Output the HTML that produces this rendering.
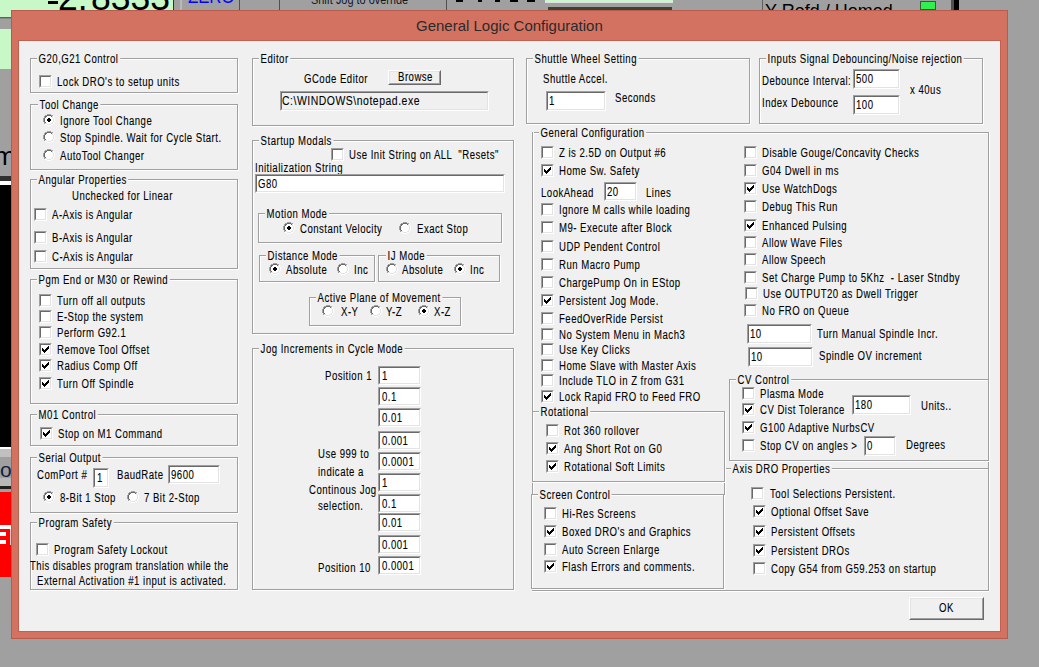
<!DOCTYPE html>
<html><head><meta charset="utf-8"><style>
*{margin:0;padding:0;box-sizing:border-box}
html,body{width:1039px;height:667px;overflow:hidden;background:#a0a0a0}
body{position:relative;font-family:"Liberation Sans",sans-serif}
.a{position:absolute}
.big{position:absolute;font-family:"Liberation Sans",sans-serif;white-space:pre;color:#000}
.t{position:absolute;white-space:pre;font-size:12px;line-height:12px;color:#000;transform:scaleX(0.8);transform-origin:0 0;-webkit-text-stroke:0.1px #000;letter-spacing:0.6px}
.gt{background:#f0f0f0;padding:0 2px}
.title{position:absolute;white-space:pre;font-size:15px;line-height:15px;color:#2a2a2a}
.gb{position:absolute;border:1px solid #a0a0a0;box-shadow:1px 1px 0 0 #fff, inset 1px 1px 0 0 #fff}
.hl{position:absolute;height:2px;border-top:1px solid #a0a0a0;border-bottom:1px solid #fff}
.vl{position:absolute;width:2px;border-left:1px solid #a0a0a0;border-right:1px solid #fff}
.cb{position:absolute;width:13px;height:13px;background:#fff;border-style:solid;border-width:1px;border-color:#a0a0a0 #fff #fff #a0a0a0}
.cbi{position:absolute;left:0;top:0;width:11px;height:11px;border-style:solid;border-width:1px;border-color:#696969 #e3e3e3 #e3e3e3 #696969}
.cb svg{left:2px!important;top:2px!important}
.rb{position:absolute;width:12px;height:12px}
.rb svg{display:block}
.ed{position:absolute;border-style:solid;border-width:1px;border-color:#a0a0a0 #fff #fff #a0a0a0}
.edi{position:absolute;left:0;top:0;right:0;bottom:0;border-style:solid;border-width:1px;border-color:#696969 #e3e3e3 #e3e3e3 #696969}
.bt{position:absolute;background:#f0f0f0;border-style:solid;border-width:1px;border-color:#fff #696969 #696969 #fff}
.bti{position:absolute;left:0;top:0;right:0;bottom:0;border-style:solid;border-width:1px;border-color:#e3e3e3 #a0a0a0 #a0a0a0 #e3e3e3}
</style></head><body>
<div class="a" style="left:0px;top:0px;width:1039px;height:667px;background:#a0a0a0;"></div>
<div class="a" style="left:0px;top:0px;width:173px;height:17px;background:#c8f8c8;"></div>
<div class="a" style="left:0px;top:17px;width:11px;height:1px;background:#606060;"></div>
<div class="a" style="left:0px;top:18px;width:11px;height:1px;background:#888888;"></div>
<div class="a" style="left:0px;top:29px;width:11px;height:40px;background:#c8f8c8;"></div>
<div class="big" style="left:-6px;top:143px;font-size:26px;line-height:26px">m</div>
<div class="a" style="left:0px;top:176px;width:11px;height:5px;background:#303030;"></div>
<div class="a" style="left:0px;top:181px;width:11px;height:4px;background:#ffffff;"></div>
<div class="a" style="left:0px;top:185px;width:11px;height:262px;background:#000000;"></div>
<div class="a" style="left:0px;top:447px;width:11px;height:2px;background:#ffffff;"></div>
<div class="a" style="left:0px;top:449px;width:11px;height:8px;background:#c0c0c0;"></div>
<div class="a" style="left:0px;top:478px;width:11px;height:9px;background:#b8b8b8;"></div>
<div class="a" style="left:0px;top:486px;width:11px;height:3px;background:#202020;"></div>
<div class="big" style="left:0px;top:459px;font-size:21px;line-height:21px;color:#102040">o</div>
<div class="a" style="left:0px;top:492px;width:11px;height:85px;background:#ff0000;"></div>
<div class="a" style="left:0px;top:525px;width:11px;height:4px;background:#ffffff;"></div>
<div class="a" style="left:0px;top:532px;width:6px;height:4px;background:#ffffff;"></div>
<div class="a" style="left:0px;top:540px;width:6px;height:4px;background:#ffffff;"></div>
<div class="a" style="left:10px;top:529px;width:1px;height:16px;background:#ffd0d0;"></div>
<div class="big" style="left:58px;top:-21px;font-size:37px;line-height:37px;transform:scaleX(0.96);transform-origin:0 0">2.</div>
<div class="big" style="left:91px;top:-21px;font-size:37px;line-height:37px;transform:scaleX(0.96);transform-origin:0 0">8333</div>
<div class="a" style="left:48px;top:1px;width:10px;height:3px;background:#000000;"></div>
<div class="a" style="left:173px;top:0px;width:1px;height:10px;background:#303030;"></div>
<div class="a" style="left:180px;top:0px;width:2px;height:10px;background:#b8b8b8;"></div>
<div class="big" style="left:188px;top:-13px;font-size:19px;line-height:19px;color:#0000ff;transform:scaleX(0.88);transform-origin:0 0">ZERO</div>
<div class="a" style="left:239px;top:0px;width:1px;height:10px;background:#505050;"></div>
<div class="a" style="left:279px;top:0px;width:1px;height:10px;background:#505050;"></div>
<div class="big" style="left:311px;top:-7px;font-size:13px;line-height:13px;color:#101828;transform:scaleX(0.84);transform-origin:0 0">Shift Jog to override</div>
<div class="a" style="left:446px;top:0px;width:1px;height:10px;background:#505050;"></div>
<div class="a" style="left:456px;top:0px;width:7px;height:2px;background:#000000;"></div>
<div class="a" style="left:478px;top:0px;width:4px;height:2px;background:#000000;"></div>
<div class="a" style="left:495px;top:0px;width:5px;height:2px;background:#000000;"></div>
<div class="a" style="left:510px;top:0px;width:8px;height:2px;background:#000000;"></div>
<div class="a" style="left:527px;top:0px;width:8px;height:2px;background:#000000;"></div>
<div class="a" style="left:545px;top:0px;width:128px;height:2px;background:#c8f8c8;"></div>
<div class="a" style="left:545px;top:2px;width:128px;height:1px;background:#e0e0e0;"></div>
<div class="a" style="left:548px;top:7px;width:124px;height:3px;background:#404030;"></div>
<div class="a" style="left:762px;top:0px;width:1px;height:10px;background:#606060;"></div>
<div class="big" style="left:765px;top:2px;font-size:18px;line-height:18px">Y Refd / Homed</div>
<div class="a" style="left:920px;top:1px;width:16px;height:9px;background:#30f050;border:1px solid #306030;box-sizing:border-box"></div>
<div class="a" style="left:951px;top:0px;width:3px;height:10px;background:#505050;"></div>
<div class="a" style="left:954px;top:0px;width:5px;height:10px;background:#000000;"></div>
<div class="a" style="left:11px;top:10px;width:997px;height:629px;background:#d47262;box-shadow:inset 0 0 0 1px #b85a4c"></div>
<div class="a" style="left:18px;top:40px;width:983px;height:592px;background:#c06050;"></div>
<div class="a" style="left:19px;top:41px;width:981px;height:590px;background:#f0f0f0;"></div>
<div class="title" style="left:416px;top:18px">General Logic Configuration</div>
<div class="gb" style="left:30px;top:58px;width:208px;height:35px"></div>
<div class="t gt" style="left:37px;top:53px">G20,G21 Control</div>
<div class="cb" style="left:39px;top:75px"><div class="cbi"></div></div>
<div class="t" style="left:57px;top:76px">Lock DRO's to setup units</div>
<div class="gb" style="left:30px;top:104px;width:208px;height:66px"></div>
<div class="t gt" style="left:38px;top:99px">Tool Change</div>
<div class="rb" style="left:43px;top:114px"><svg width="12" height="12" shape-rendering="crispEdges"><rect x="4" y="2" width="4" height="1" fill="#fff"/><rect x="3" y="3" width="6" height="1" fill="#fff"/><rect x="2" y="4" width="8" height="1" fill="#fff"/><rect x="2" y="5" width="8" height="1" fill="#fff"/><rect x="2" y="6" width="8" height="1" fill="#fff"/><rect x="2" y="7" width="8" height="1" fill="#fff"/><rect x="3" y="8" width="6" height="1" fill="#fff"/><rect x="4" y="9" width="4" height="1" fill="#fff"/><rect x="4" y="0" width="1" height="1" fill="#a0a0a0"/><rect x="5" y="0" width="1" height="1" fill="#a0a0a0"/><rect x="6" y="0" width="1" height="1" fill="#a0a0a0"/><rect x="7" y="0" width="1" height="1" fill="#a0a0a0"/><rect x="2" y="1" width="1" height="1" fill="#a0a0a0"/><rect x="3" y="1" width="1" height="1" fill="#a0a0a0"/><rect x="8" y="1" width="1" height="1" fill="#a0a0a0"/><rect x="9" y="1" width="1" height="1" fill="#a0a0a0"/><rect x="1" y="2" width="1" height="1" fill="#a0a0a0"/><rect x="10" y="2" width="1" height="1" fill="#ffffff"/><rect x="1" y="3" width="1" height="1" fill="#a0a0a0"/><rect x="10" y="3" width="1" height="1" fill="#ffffff"/><rect x="0" y="4" width="1" height="1" fill="#a0a0a0"/><rect x="11" y="4" width="1" height="1" fill="#ffffff"/><rect x="0" y="5" width="1" height="1" fill="#a0a0a0"/><rect x="11" y="5" width="1" height="1" fill="#ffffff"/><rect x="0" y="6" width="1" height="1" fill="#a0a0a0"/><rect x="11" y="6" width="1" height="1" fill="#ffffff"/><rect x="0" y="7" width="1" height="1" fill="#a0a0a0"/><rect x="11" y="7" width="1" height="1" fill="#ffffff"/><rect x="1" y="8" width="1" height="1" fill="#a0a0a0"/><rect x="10" y="8" width="1" height="1" fill="#ffffff"/><rect x="1" y="9" width="1" height="1" fill="#a0a0a0"/><rect x="10" y="9" width="1" height="1" fill="#ffffff"/><rect x="2" y="10" width="1" height="1" fill="#ffffff"/><rect x="3" y="10" width="1" height="1" fill="#ffffff"/><rect x="8" y="10" width="1" height="1" fill="#ffffff"/><rect x="9" y="10" width="1" height="1" fill="#ffffff"/><rect x="4" y="11" width="1" height="1" fill="#ffffff"/><rect x="5" y="11" width="1" height="1" fill="#ffffff"/><rect x="6" y="11" width="1" height="1" fill="#ffffff"/><rect x="7" y="11" width="1" height="1" fill="#ffffff"/><rect x="4" y="1" width="1" height="1" fill="#696969"/><rect x="5" y="1" width="1" height="1" fill="#696969"/><rect x="6" y="1" width="1" height="1" fill="#696969"/><rect x="7" y="1" width="1" height="1" fill="#696969"/><rect x="2" y="2" width="1" height="1" fill="#696969"/><rect x="3" y="2" width="1" height="1" fill="#696969"/><rect x="8" y="2" width="1" height="1" fill="#696969"/><rect x="9" y="2" width="1" height="1" fill="#e3e3e3"/><rect x="2" y="3" width="1" height="1" fill="#696969"/><rect x="9" y="3" width="1" height="1" fill="#e3e3e3"/><rect x="1" y="4" width="1" height="1" fill="#696969"/><rect x="10" y="4" width="1" height="1" fill="#e3e3e3"/><rect x="1" y="5" width="1" height="1" fill="#696969"/><rect x="10" y="5" width="1" height="1" fill="#e3e3e3"/><rect x="1" y="6" width="1" height="1" fill="#696969"/><rect x="10" y="6" width="1" height="1" fill="#e3e3e3"/><rect x="1" y="7" width="1" height="1" fill="#696969"/><rect x="10" y="7" width="1" height="1" fill="#e3e3e3"/><rect x="2" y="8" width="1" height="1" fill="#696969"/><rect x="9" y="8" width="1" height="1" fill="#e3e3e3"/><rect x="2" y="9" width="1" height="1" fill="#e3e3e3"/><rect x="3" y="9" width="1" height="1" fill="#e3e3e3"/><rect x="8" y="9" width="1" height="1" fill="#e3e3e3"/><rect x="9" y="9" width="1" height="1" fill="#e3e3e3"/><rect x="4" y="10" width="1" height="1" fill="#e3e3e3"/><rect x="5" y="10" width="1" height="1" fill="#e3e3e3"/><rect x="6" y="10" width="1" height="1" fill="#e3e3e3"/><rect x="7" y="10" width="1" height="1" fill="#e3e3e3"/><path d="M5 4h2v1h1v2h-1v1h-2v-1h-1v-2h1z" fill="#000"/></svg></div>
<div class="t" style="left:60px;top:115px">Ignore Tool Change</div>
<div class="rb" style="left:43px;top:131px"><svg width="12" height="12" shape-rendering="crispEdges"><rect x="4" y="2" width="4" height="1" fill="#fff"/><rect x="3" y="3" width="6" height="1" fill="#fff"/><rect x="2" y="4" width="8" height="1" fill="#fff"/><rect x="2" y="5" width="8" height="1" fill="#fff"/><rect x="2" y="6" width="8" height="1" fill="#fff"/><rect x="2" y="7" width="8" height="1" fill="#fff"/><rect x="3" y="8" width="6" height="1" fill="#fff"/><rect x="4" y="9" width="4" height="1" fill="#fff"/><rect x="4" y="0" width="1" height="1" fill="#a0a0a0"/><rect x="5" y="0" width="1" height="1" fill="#a0a0a0"/><rect x="6" y="0" width="1" height="1" fill="#a0a0a0"/><rect x="7" y="0" width="1" height="1" fill="#a0a0a0"/><rect x="2" y="1" width="1" height="1" fill="#a0a0a0"/><rect x="3" y="1" width="1" height="1" fill="#a0a0a0"/><rect x="8" y="1" width="1" height="1" fill="#a0a0a0"/><rect x="9" y="1" width="1" height="1" fill="#a0a0a0"/><rect x="1" y="2" width="1" height="1" fill="#a0a0a0"/><rect x="10" y="2" width="1" height="1" fill="#ffffff"/><rect x="1" y="3" width="1" height="1" fill="#a0a0a0"/><rect x="10" y="3" width="1" height="1" fill="#ffffff"/><rect x="0" y="4" width="1" height="1" fill="#a0a0a0"/><rect x="11" y="4" width="1" height="1" fill="#ffffff"/><rect x="0" y="5" width="1" height="1" fill="#a0a0a0"/><rect x="11" y="5" width="1" height="1" fill="#ffffff"/><rect x="0" y="6" width="1" height="1" fill="#a0a0a0"/><rect x="11" y="6" width="1" height="1" fill="#ffffff"/><rect x="0" y="7" width="1" height="1" fill="#a0a0a0"/><rect x="11" y="7" width="1" height="1" fill="#ffffff"/><rect x="1" y="8" width="1" height="1" fill="#a0a0a0"/><rect x="10" y="8" width="1" height="1" fill="#ffffff"/><rect x="1" y="9" width="1" height="1" fill="#a0a0a0"/><rect x="10" y="9" width="1" height="1" fill="#ffffff"/><rect x="2" y="10" width="1" height="1" fill="#ffffff"/><rect x="3" y="10" width="1" height="1" fill="#ffffff"/><rect x="8" y="10" width="1" height="1" fill="#ffffff"/><rect x="9" y="10" width="1" height="1" fill="#ffffff"/><rect x="4" y="11" width="1" height="1" fill="#ffffff"/><rect x="5" y="11" width="1" height="1" fill="#ffffff"/><rect x="6" y="11" width="1" height="1" fill="#ffffff"/><rect x="7" y="11" width="1" height="1" fill="#ffffff"/><rect x="4" y="1" width="1" height="1" fill="#696969"/><rect x="5" y="1" width="1" height="1" fill="#696969"/><rect x="6" y="1" width="1" height="1" fill="#696969"/><rect x="7" y="1" width="1" height="1" fill="#696969"/><rect x="2" y="2" width="1" height="1" fill="#696969"/><rect x="3" y="2" width="1" height="1" fill="#696969"/><rect x="8" y="2" width="1" height="1" fill="#696969"/><rect x="9" y="2" width="1" height="1" fill="#e3e3e3"/><rect x="2" y="3" width="1" height="1" fill="#696969"/><rect x="9" y="3" width="1" height="1" fill="#e3e3e3"/><rect x="1" y="4" width="1" height="1" fill="#696969"/><rect x="10" y="4" width="1" height="1" fill="#e3e3e3"/><rect x="1" y="5" width="1" height="1" fill="#696969"/><rect x="10" y="5" width="1" height="1" fill="#e3e3e3"/><rect x="1" y="6" width="1" height="1" fill="#696969"/><rect x="10" y="6" width="1" height="1" fill="#e3e3e3"/><rect x="1" y="7" width="1" height="1" fill="#696969"/><rect x="10" y="7" width="1" height="1" fill="#e3e3e3"/><rect x="2" y="8" width="1" height="1" fill="#696969"/><rect x="9" y="8" width="1" height="1" fill="#e3e3e3"/><rect x="2" y="9" width="1" height="1" fill="#e3e3e3"/><rect x="3" y="9" width="1" height="1" fill="#e3e3e3"/><rect x="8" y="9" width="1" height="1" fill="#e3e3e3"/><rect x="9" y="9" width="1" height="1" fill="#e3e3e3"/><rect x="4" y="10" width="1" height="1" fill="#e3e3e3"/><rect x="5" y="10" width="1" height="1" fill="#e3e3e3"/><rect x="6" y="10" width="1" height="1" fill="#e3e3e3"/><rect x="7" y="10" width="1" height="1" fill="#e3e3e3"/></svg></div>
<div class="t" style="left:60px;top:132px">Stop Spindle. Wait for Cycle Start.</div>
<div class="rb" style="left:43px;top:149px"><svg width="12" height="12" shape-rendering="crispEdges"><rect x="4" y="2" width="4" height="1" fill="#fff"/><rect x="3" y="3" width="6" height="1" fill="#fff"/><rect x="2" y="4" width="8" height="1" fill="#fff"/><rect x="2" y="5" width="8" height="1" fill="#fff"/><rect x="2" y="6" width="8" height="1" fill="#fff"/><rect x="2" y="7" width="8" height="1" fill="#fff"/><rect x="3" y="8" width="6" height="1" fill="#fff"/><rect x="4" y="9" width="4" height="1" fill="#fff"/><rect x="4" y="0" width="1" height="1" fill="#a0a0a0"/><rect x="5" y="0" width="1" height="1" fill="#a0a0a0"/><rect x="6" y="0" width="1" height="1" fill="#a0a0a0"/><rect x="7" y="0" width="1" height="1" fill="#a0a0a0"/><rect x="2" y="1" width="1" height="1" fill="#a0a0a0"/><rect x="3" y="1" width="1" height="1" fill="#a0a0a0"/><rect x="8" y="1" width="1" height="1" fill="#a0a0a0"/><rect x="9" y="1" width="1" height="1" fill="#a0a0a0"/><rect x="1" y="2" width="1" height="1" fill="#a0a0a0"/><rect x="10" y="2" width="1" height="1" fill="#ffffff"/><rect x="1" y="3" width="1" height="1" fill="#a0a0a0"/><rect x="10" y="3" width="1" height="1" fill="#ffffff"/><rect x="0" y="4" width="1" height="1" fill="#a0a0a0"/><rect x="11" y="4" width="1" height="1" fill="#ffffff"/><rect x="0" y="5" width="1" height="1" fill="#a0a0a0"/><rect x="11" y="5" width="1" height="1" fill="#ffffff"/><rect x="0" y="6" width="1" height="1" fill="#a0a0a0"/><rect x="11" y="6" width="1" height="1" fill="#ffffff"/><rect x="0" y="7" width="1" height="1" fill="#a0a0a0"/><rect x="11" y="7" width="1" height="1" fill="#ffffff"/><rect x="1" y="8" width="1" height="1" fill="#a0a0a0"/><rect x="10" y="8" width="1" height="1" fill="#ffffff"/><rect x="1" y="9" width="1" height="1" fill="#a0a0a0"/><rect x="10" y="9" width="1" height="1" fill="#ffffff"/><rect x="2" y="10" width="1" height="1" fill="#ffffff"/><rect x="3" y="10" width="1" height="1" fill="#ffffff"/><rect x="8" y="10" width="1" height="1" fill="#ffffff"/><rect x="9" y="10" width="1" height="1" fill="#ffffff"/><rect x="4" y="11" width="1" height="1" fill="#ffffff"/><rect x="5" y="11" width="1" height="1" fill="#ffffff"/><rect x="6" y="11" width="1" height="1" fill="#ffffff"/><rect x="7" y="11" width="1" height="1" fill="#ffffff"/><rect x="4" y="1" width="1" height="1" fill="#696969"/><rect x="5" y="1" width="1" height="1" fill="#696969"/><rect x="6" y="1" width="1" height="1" fill="#696969"/><rect x="7" y="1" width="1" height="1" fill="#696969"/><rect x="2" y="2" width="1" height="1" fill="#696969"/><rect x="3" y="2" width="1" height="1" fill="#696969"/><rect x="8" y="2" width="1" height="1" fill="#696969"/><rect x="9" y="2" width="1" height="1" fill="#e3e3e3"/><rect x="2" y="3" width="1" height="1" fill="#696969"/><rect x="9" y="3" width="1" height="1" fill="#e3e3e3"/><rect x="1" y="4" width="1" height="1" fill="#696969"/><rect x="10" y="4" width="1" height="1" fill="#e3e3e3"/><rect x="1" y="5" width="1" height="1" fill="#696969"/><rect x="10" y="5" width="1" height="1" fill="#e3e3e3"/><rect x="1" y="6" width="1" height="1" fill="#696969"/><rect x="10" y="6" width="1" height="1" fill="#e3e3e3"/><rect x="1" y="7" width="1" height="1" fill="#696969"/><rect x="10" y="7" width="1" height="1" fill="#e3e3e3"/><rect x="2" y="8" width="1" height="1" fill="#696969"/><rect x="9" y="8" width="1" height="1" fill="#e3e3e3"/><rect x="2" y="9" width="1" height="1" fill="#e3e3e3"/><rect x="3" y="9" width="1" height="1" fill="#e3e3e3"/><rect x="8" y="9" width="1" height="1" fill="#e3e3e3"/><rect x="9" y="9" width="1" height="1" fill="#e3e3e3"/><rect x="4" y="10" width="1" height="1" fill="#e3e3e3"/><rect x="5" y="10" width="1" height="1" fill="#e3e3e3"/><rect x="6" y="10" width="1" height="1" fill="#e3e3e3"/><rect x="7" y="10" width="1" height="1" fill="#e3e3e3"/></svg></div>
<div class="t" style="left:60px;top:150px">AutoTool Changer</div>
<div class="gb" style="left:30px;top:179px;width:208px;height:90px"></div>
<div class="t gt" style="left:37px;top:174px">Angular Properties</div>
<div class="t" style="left:72px;top:190px">Unchecked for Linear</div>
<div class="cb" style="left:34px;top:208px"><div class="cbi"></div></div>
<div class="t" style="left:52px;top:209px">A-Axis is Angular</div>
<div class="cb" style="left:34px;top:231px"><div class="cbi"></div></div>
<div class="t" style="left:52px;top:232px">B-Axis is Angular</div>
<div class="cb" style="left:34px;top:250px"><div class="cbi"></div></div>
<div class="t" style="left:52px;top:251px">C-Axis is Angular</div>
<div class="gb" style="left:30px;top:279px;width:208px;height:125px"></div>
<div class="t gt" style="left:37px;top:274px">Pgm End or M30 or Rewind</div>
<div class="cb" style="left:39px;top:294px"><div class="cbi"></div></div>
<div class="t" style="left:57px;top:295px">Turn off all outputs</div>
<div class="cb" style="left:39px;top:310px"><div class="cbi"></div></div>
<div class="t" style="left:57px;top:311px">E-Stop the system</div>
<div class="cb" style="left:39px;top:326px"><div class="cbi"></div></div>
<div class="t" style="left:57px;top:327px">Perform G92.1</div>
<div class="cb" style="left:39px;top:343px"><div class="cbi"></div><svg width="7" height="7" style="position:absolute;left:3px;top:3px" shape-rendering="crispEdges"><path d="M6 0h1v3h-1zM5 1h1v3h-1zM4 2h1v3h-1zM3 3h1v3h-1zM2 4h1v3h-1zM1 3h1v3h-1zM0 2h1v3h-1z" fill="#000"/></svg></div>
<div class="t" style="left:57px;top:344px">Remove Tool Offset</div>
<div class="cb" style="left:39px;top:359px"><div class="cbi"></div><svg width="7" height="7" style="position:absolute;left:3px;top:3px" shape-rendering="crispEdges"><path d="M6 0h1v3h-1zM5 1h1v3h-1zM4 2h1v3h-1zM3 3h1v3h-1zM2 4h1v3h-1zM1 3h1v3h-1zM0 2h1v3h-1z" fill="#000"/></svg></div>
<div class="t" style="left:57px;top:360px">Radius Comp Off</div>
<div class="cb" style="left:39px;top:377px"><div class="cbi"></div><svg width="7" height="7" style="position:absolute;left:3px;top:3px" shape-rendering="crispEdges"><path d="M6 0h1v3h-1zM5 1h1v3h-1zM4 2h1v3h-1zM3 3h1v3h-1zM2 4h1v3h-1zM1 3h1v3h-1zM0 2h1v3h-1z" fill="#000"/></svg></div>
<div class="t" style="left:57px;top:378px">Turn Off Spindle</div>
<div class="gb" style="left:30px;top:414px;width:208px;height:32px"></div>
<div class="t gt" style="left:37px;top:409px">M01 Control</div>
<div class="cb" style="left:40px;top:427px"><div class="cbi"></div><svg width="7" height="7" style="position:absolute;left:3px;top:3px" shape-rendering="crispEdges"><path d="M6 0h1v3h-1zM5 1h1v3h-1zM4 2h1v3h-1zM3 3h1v3h-1zM2 4h1v3h-1zM1 3h1v3h-1zM0 2h1v3h-1z" fill="#000"/></svg></div>
<div class="t" style="left:58px;top:428px">Stop on M1 Command</div>
<div class="gb" style="left:30px;top:457px;width:208px;height:56px"></div>
<div class="t gt" style="left:37px;top:452px">Serial Output</div>
<div class="t" style="left:37px;top:469px">ComPort #</div>
<div class="ed" style="left:93px;top:468px;width:16px;height:20px;background:#fff"><div class="edi"></div></div>
<div class="t" style="left:97px;top:472px">1</div>
<div class="t" style="left:117px;top:469px">BaudRate</div>
<div class="ed" style="left:168px;top:465px;width:52px;height:19px;background:#fff"><div class="edi"></div></div>
<div class="t" style="left:171px;top:469px">9600</div>
<div class="rb" style="left:43px;top:491px"><svg width="12" height="12" shape-rendering="crispEdges"><rect x="4" y="2" width="4" height="1" fill="#fff"/><rect x="3" y="3" width="6" height="1" fill="#fff"/><rect x="2" y="4" width="8" height="1" fill="#fff"/><rect x="2" y="5" width="8" height="1" fill="#fff"/><rect x="2" y="6" width="8" height="1" fill="#fff"/><rect x="2" y="7" width="8" height="1" fill="#fff"/><rect x="3" y="8" width="6" height="1" fill="#fff"/><rect x="4" y="9" width="4" height="1" fill="#fff"/><rect x="4" y="0" width="1" height="1" fill="#a0a0a0"/><rect x="5" y="0" width="1" height="1" fill="#a0a0a0"/><rect x="6" y="0" width="1" height="1" fill="#a0a0a0"/><rect x="7" y="0" width="1" height="1" fill="#a0a0a0"/><rect x="2" y="1" width="1" height="1" fill="#a0a0a0"/><rect x="3" y="1" width="1" height="1" fill="#a0a0a0"/><rect x="8" y="1" width="1" height="1" fill="#a0a0a0"/><rect x="9" y="1" width="1" height="1" fill="#a0a0a0"/><rect x="1" y="2" width="1" height="1" fill="#a0a0a0"/><rect x="10" y="2" width="1" height="1" fill="#ffffff"/><rect x="1" y="3" width="1" height="1" fill="#a0a0a0"/><rect x="10" y="3" width="1" height="1" fill="#ffffff"/><rect x="0" y="4" width="1" height="1" fill="#a0a0a0"/><rect x="11" y="4" width="1" height="1" fill="#ffffff"/><rect x="0" y="5" width="1" height="1" fill="#a0a0a0"/><rect x="11" y="5" width="1" height="1" fill="#ffffff"/><rect x="0" y="6" width="1" height="1" fill="#a0a0a0"/><rect x="11" y="6" width="1" height="1" fill="#ffffff"/><rect x="0" y="7" width="1" height="1" fill="#a0a0a0"/><rect x="11" y="7" width="1" height="1" fill="#ffffff"/><rect x="1" y="8" width="1" height="1" fill="#a0a0a0"/><rect x="10" y="8" width="1" height="1" fill="#ffffff"/><rect x="1" y="9" width="1" height="1" fill="#a0a0a0"/><rect x="10" y="9" width="1" height="1" fill="#ffffff"/><rect x="2" y="10" width="1" height="1" fill="#ffffff"/><rect x="3" y="10" width="1" height="1" fill="#ffffff"/><rect x="8" y="10" width="1" height="1" fill="#ffffff"/><rect x="9" y="10" width="1" height="1" fill="#ffffff"/><rect x="4" y="11" width="1" height="1" fill="#ffffff"/><rect x="5" y="11" width="1" height="1" fill="#ffffff"/><rect x="6" y="11" width="1" height="1" fill="#ffffff"/><rect x="7" y="11" width="1" height="1" fill="#ffffff"/><rect x="4" y="1" width="1" height="1" fill="#696969"/><rect x="5" y="1" width="1" height="1" fill="#696969"/><rect x="6" y="1" width="1" height="1" fill="#696969"/><rect x="7" y="1" width="1" height="1" fill="#696969"/><rect x="2" y="2" width="1" height="1" fill="#696969"/><rect x="3" y="2" width="1" height="1" fill="#696969"/><rect x="8" y="2" width="1" height="1" fill="#696969"/><rect x="9" y="2" width="1" height="1" fill="#e3e3e3"/><rect x="2" y="3" width="1" height="1" fill="#696969"/><rect x="9" y="3" width="1" height="1" fill="#e3e3e3"/><rect x="1" y="4" width="1" height="1" fill="#696969"/><rect x="10" y="4" width="1" height="1" fill="#e3e3e3"/><rect x="1" y="5" width="1" height="1" fill="#696969"/><rect x="10" y="5" width="1" height="1" fill="#e3e3e3"/><rect x="1" y="6" width="1" height="1" fill="#696969"/><rect x="10" y="6" width="1" height="1" fill="#e3e3e3"/><rect x="1" y="7" width="1" height="1" fill="#696969"/><rect x="10" y="7" width="1" height="1" fill="#e3e3e3"/><rect x="2" y="8" width="1" height="1" fill="#696969"/><rect x="9" y="8" width="1" height="1" fill="#e3e3e3"/><rect x="2" y="9" width="1" height="1" fill="#e3e3e3"/><rect x="3" y="9" width="1" height="1" fill="#e3e3e3"/><rect x="8" y="9" width="1" height="1" fill="#e3e3e3"/><rect x="9" y="9" width="1" height="1" fill="#e3e3e3"/><rect x="4" y="10" width="1" height="1" fill="#e3e3e3"/><rect x="5" y="10" width="1" height="1" fill="#e3e3e3"/><rect x="6" y="10" width="1" height="1" fill="#e3e3e3"/><rect x="7" y="10" width="1" height="1" fill="#e3e3e3"/><path d="M5 4h2v1h1v2h-1v1h-2v-1h-1v-2h1z" fill="#000"/></svg></div>
<div class="t" style="left:60px;top:492px">8-Bit 1 Stop</div>
<div class="rb" style="left:127px;top:491px"><svg width="12" height="12" shape-rendering="crispEdges"><rect x="4" y="2" width="4" height="1" fill="#fff"/><rect x="3" y="3" width="6" height="1" fill="#fff"/><rect x="2" y="4" width="8" height="1" fill="#fff"/><rect x="2" y="5" width="8" height="1" fill="#fff"/><rect x="2" y="6" width="8" height="1" fill="#fff"/><rect x="2" y="7" width="8" height="1" fill="#fff"/><rect x="3" y="8" width="6" height="1" fill="#fff"/><rect x="4" y="9" width="4" height="1" fill="#fff"/><rect x="4" y="0" width="1" height="1" fill="#a0a0a0"/><rect x="5" y="0" width="1" height="1" fill="#a0a0a0"/><rect x="6" y="0" width="1" height="1" fill="#a0a0a0"/><rect x="7" y="0" width="1" height="1" fill="#a0a0a0"/><rect x="2" y="1" width="1" height="1" fill="#a0a0a0"/><rect x="3" y="1" width="1" height="1" fill="#a0a0a0"/><rect x="8" y="1" width="1" height="1" fill="#a0a0a0"/><rect x="9" y="1" width="1" height="1" fill="#a0a0a0"/><rect x="1" y="2" width="1" height="1" fill="#a0a0a0"/><rect x="10" y="2" width="1" height="1" fill="#ffffff"/><rect x="1" y="3" width="1" height="1" fill="#a0a0a0"/><rect x="10" y="3" width="1" height="1" fill="#ffffff"/><rect x="0" y="4" width="1" height="1" fill="#a0a0a0"/><rect x="11" y="4" width="1" height="1" fill="#ffffff"/><rect x="0" y="5" width="1" height="1" fill="#a0a0a0"/><rect x="11" y="5" width="1" height="1" fill="#ffffff"/><rect x="0" y="6" width="1" height="1" fill="#a0a0a0"/><rect x="11" y="6" width="1" height="1" fill="#ffffff"/><rect x="0" y="7" width="1" height="1" fill="#a0a0a0"/><rect x="11" y="7" width="1" height="1" fill="#ffffff"/><rect x="1" y="8" width="1" height="1" fill="#a0a0a0"/><rect x="10" y="8" width="1" height="1" fill="#ffffff"/><rect x="1" y="9" width="1" height="1" fill="#a0a0a0"/><rect x="10" y="9" width="1" height="1" fill="#ffffff"/><rect x="2" y="10" width="1" height="1" fill="#ffffff"/><rect x="3" y="10" width="1" height="1" fill="#ffffff"/><rect x="8" y="10" width="1" height="1" fill="#ffffff"/><rect x="9" y="10" width="1" height="1" fill="#ffffff"/><rect x="4" y="11" width="1" height="1" fill="#ffffff"/><rect x="5" y="11" width="1" height="1" fill="#ffffff"/><rect x="6" y="11" width="1" height="1" fill="#ffffff"/><rect x="7" y="11" width="1" height="1" fill="#ffffff"/><rect x="4" y="1" width="1" height="1" fill="#696969"/><rect x="5" y="1" width="1" height="1" fill="#696969"/><rect x="6" y="1" width="1" height="1" fill="#696969"/><rect x="7" y="1" width="1" height="1" fill="#696969"/><rect x="2" y="2" width="1" height="1" fill="#696969"/><rect x="3" y="2" width="1" height="1" fill="#696969"/><rect x="8" y="2" width="1" height="1" fill="#696969"/><rect x="9" y="2" width="1" height="1" fill="#e3e3e3"/><rect x="2" y="3" width="1" height="1" fill="#696969"/><rect x="9" y="3" width="1" height="1" fill="#e3e3e3"/><rect x="1" y="4" width="1" height="1" fill="#696969"/><rect x="10" y="4" width="1" height="1" fill="#e3e3e3"/><rect x="1" y="5" width="1" height="1" fill="#696969"/><rect x="10" y="5" width="1" height="1" fill="#e3e3e3"/><rect x="1" y="6" width="1" height="1" fill="#696969"/><rect x="10" y="6" width="1" height="1" fill="#e3e3e3"/><rect x="1" y="7" width="1" height="1" fill="#696969"/><rect x="10" y="7" width="1" height="1" fill="#e3e3e3"/><rect x="2" y="8" width="1" height="1" fill="#696969"/><rect x="9" y="8" width="1" height="1" fill="#e3e3e3"/><rect x="2" y="9" width="1" height="1" fill="#e3e3e3"/><rect x="3" y="9" width="1" height="1" fill="#e3e3e3"/><rect x="8" y="9" width="1" height="1" fill="#e3e3e3"/><rect x="9" y="9" width="1" height="1" fill="#e3e3e3"/><rect x="4" y="10" width="1" height="1" fill="#e3e3e3"/><rect x="5" y="10" width="1" height="1" fill="#e3e3e3"/><rect x="6" y="10" width="1" height="1" fill="#e3e3e3"/><rect x="7" y="10" width="1" height="1" fill="#e3e3e3"/></svg></div>
<div class="t" style="left:144px;top:492px">7 Bit 2-Stop</div>
<div class="gb" style="left:30px;top:522px;width:208px;height:68px"></div>
<div class="t gt" style="left:37px;top:517px">Program Safety</div>
<div class="cb" style="left:36px;top:543px"><div class="cbi"></div></div>
<div class="t" style="left:54px;top:544px">Program Safety Lockout</div>
<div class="t" style="left:30px;top:560px;transform:scaleX(0.785)">This disables program translation while the</div>
<div class="t" style="left:37px;top:575px">External Activation #1 input is activated.</div>
<div class="gb" style="left:252px;top:58px;width:262px;height:68px"></div>
<div class="t gt" style="left:259px;top:53px">Editor</div>
<div class="t" style="left:304px;top:73px">GCode Editor</div>
<div class="bt" style="left:388px;top:70px;width:53px;height:15px"><div class="bti"></div></div>
<div class="t" style="left:398px;top:71px">Browse</div>
<div class="ed" style="left:280px;top:91px;width:209px;height:20px;background:#f0f0f0"><div class="edi"></div></div>
<div class="t" style="left:282px;top:95px;transform:scaleX(0.87)">C:\WINDOWS\notepad.exe</div>
<div class="gb" style="left:252px;top:140px;width:262px;height:194px"></div>
<div class="t gt" style="left:259px;top:135px">Startup Modals</div>
<div class="cb" style="left:331px;top:148px"><div class="cbi"></div></div>
<div class="t" style="left:349px;top:149px">Use Init String on ALL  "Resets"</div>
<div class="t" style="left:255px;top:162px">Initialization String</div>
<div class="ed" style="left:255px;top:174px;width:250px;height:19px;background:#fff"><div class="edi"></div></div>
<div class="t" style="left:258px;top:178px">G80</div>
<div class="gb" style="left:258px;top:213px;width:244px;height:30px"></div>
<div class="t gt" style="left:265px;top:208px">Motion Mode</div>
<div class="rb" style="left:283px;top:222px"><svg width="12" height="12" shape-rendering="crispEdges"><rect x="4" y="2" width="4" height="1" fill="#fff"/><rect x="3" y="3" width="6" height="1" fill="#fff"/><rect x="2" y="4" width="8" height="1" fill="#fff"/><rect x="2" y="5" width="8" height="1" fill="#fff"/><rect x="2" y="6" width="8" height="1" fill="#fff"/><rect x="2" y="7" width="8" height="1" fill="#fff"/><rect x="3" y="8" width="6" height="1" fill="#fff"/><rect x="4" y="9" width="4" height="1" fill="#fff"/><rect x="4" y="0" width="1" height="1" fill="#a0a0a0"/><rect x="5" y="0" width="1" height="1" fill="#a0a0a0"/><rect x="6" y="0" width="1" height="1" fill="#a0a0a0"/><rect x="7" y="0" width="1" height="1" fill="#a0a0a0"/><rect x="2" y="1" width="1" height="1" fill="#a0a0a0"/><rect x="3" y="1" width="1" height="1" fill="#a0a0a0"/><rect x="8" y="1" width="1" height="1" fill="#a0a0a0"/><rect x="9" y="1" width="1" height="1" fill="#a0a0a0"/><rect x="1" y="2" width="1" height="1" fill="#a0a0a0"/><rect x="10" y="2" width="1" height="1" fill="#ffffff"/><rect x="1" y="3" width="1" height="1" fill="#a0a0a0"/><rect x="10" y="3" width="1" height="1" fill="#ffffff"/><rect x="0" y="4" width="1" height="1" fill="#a0a0a0"/><rect x="11" y="4" width="1" height="1" fill="#ffffff"/><rect x="0" y="5" width="1" height="1" fill="#a0a0a0"/><rect x="11" y="5" width="1" height="1" fill="#ffffff"/><rect x="0" y="6" width="1" height="1" fill="#a0a0a0"/><rect x="11" y="6" width="1" height="1" fill="#ffffff"/><rect x="0" y="7" width="1" height="1" fill="#a0a0a0"/><rect x="11" y="7" width="1" height="1" fill="#ffffff"/><rect x="1" y="8" width="1" height="1" fill="#a0a0a0"/><rect x="10" y="8" width="1" height="1" fill="#ffffff"/><rect x="1" y="9" width="1" height="1" fill="#a0a0a0"/><rect x="10" y="9" width="1" height="1" fill="#ffffff"/><rect x="2" y="10" width="1" height="1" fill="#ffffff"/><rect x="3" y="10" width="1" height="1" fill="#ffffff"/><rect x="8" y="10" width="1" height="1" fill="#ffffff"/><rect x="9" y="10" width="1" height="1" fill="#ffffff"/><rect x="4" y="11" width="1" height="1" fill="#ffffff"/><rect x="5" y="11" width="1" height="1" fill="#ffffff"/><rect x="6" y="11" width="1" height="1" fill="#ffffff"/><rect x="7" y="11" width="1" height="1" fill="#ffffff"/><rect x="4" y="1" width="1" height="1" fill="#696969"/><rect x="5" y="1" width="1" height="1" fill="#696969"/><rect x="6" y="1" width="1" height="1" fill="#696969"/><rect x="7" y="1" width="1" height="1" fill="#696969"/><rect x="2" y="2" width="1" height="1" fill="#696969"/><rect x="3" y="2" width="1" height="1" fill="#696969"/><rect x="8" y="2" width="1" height="1" fill="#696969"/><rect x="9" y="2" width="1" height="1" fill="#e3e3e3"/><rect x="2" y="3" width="1" height="1" fill="#696969"/><rect x="9" y="3" width="1" height="1" fill="#e3e3e3"/><rect x="1" y="4" width="1" height="1" fill="#696969"/><rect x="10" y="4" width="1" height="1" fill="#e3e3e3"/><rect x="1" y="5" width="1" height="1" fill="#696969"/><rect x="10" y="5" width="1" height="1" fill="#e3e3e3"/><rect x="1" y="6" width="1" height="1" fill="#696969"/><rect x="10" y="6" width="1" height="1" fill="#e3e3e3"/><rect x="1" y="7" width="1" height="1" fill="#696969"/><rect x="10" y="7" width="1" height="1" fill="#e3e3e3"/><rect x="2" y="8" width="1" height="1" fill="#696969"/><rect x="9" y="8" width="1" height="1" fill="#e3e3e3"/><rect x="2" y="9" width="1" height="1" fill="#e3e3e3"/><rect x="3" y="9" width="1" height="1" fill="#e3e3e3"/><rect x="8" y="9" width="1" height="1" fill="#e3e3e3"/><rect x="9" y="9" width="1" height="1" fill="#e3e3e3"/><rect x="4" y="10" width="1" height="1" fill="#e3e3e3"/><rect x="5" y="10" width="1" height="1" fill="#e3e3e3"/><rect x="6" y="10" width="1" height="1" fill="#e3e3e3"/><rect x="7" y="10" width="1" height="1" fill="#e3e3e3"/><path d="M5 4h2v1h1v2h-1v1h-2v-1h-1v-2h1z" fill="#000"/></svg></div>
<div class="t" style="left:300px;top:223px">Constant Velocity</div>
<div class="rb" style="left:399px;top:222px"><svg width="12" height="12" shape-rendering="crispEdges"><rect x="4" y="2" width="4" height="1" fill="#fff"/><rect x="3" y="3" width="6" height="1" fill="#fff"/><rect x="2" y="4" width="8" height="1" fill="#fff"/><rect x="2" y="5" width="8" height="1" fill="#fff"/><rect x="2" y="6" width="8" height="1" fill="#fff"/><rect x="2" y="7" width="8" height="1" fill="#fff"/><rect x="3" y="8" width="6" height="1" fill="#fff"/><rect x="4" y="9" width="4" height="1" fill="#fff"/><rect x="4" y="0" width="1" height="1" fill="#a0a0a0"/><rect x="5" y="0" width="1" height="1" fill="#a0a0a0"/><rect x="6" y="0" width="1" height="1" fill="#a0a0a0"/><rect x="7" y="0" width="1" height="1" fill="#a0a0a0"/><rect x="2" y="1" width="1" height="1" fill="#a0a0a0"/><rect x="3" y="1" width="1" height="1" fill="#a0a0a0"/><rect x="8" y="1" width="1" height="1" fill="#a0a0a0"/><rect x="9" y="1" width="1" height="1" fill="#a0a0a0"/><rect x="1" y="2" width="1" height="1" fill="#a0a0a0"/><rect x="10" y="2" width="1" height="1" fill="#ffffff"/><rect x="1" y="3" width="1" height="1" fill="#a0a0a0"/><rect x="10" y="3" width="1" height="1" fill="#ffffff"/><rect x="0" y="4" width="1" height="1" fill="#a0a0a0"/><rect x="11" y="4" width="1" height="1" fill="#ffffff"/><rect x="0" y="5" width="1" height="1" fill="#a0a0a0"/><rect x="11" y="5" width="1" height="1" fill="#ffffff"/><rect x="0" y="6" width="1" height="1" fill="#a0a0a0"/><rect x="11" y="6" width="1" height="1" fill="#ffffff"/><rect x="0" y="7" width="1" height="1" fill="#a0a0a0"/><rect x="11" y="7" width="1" height="1" fill="#ffffff"/><rect x="1" y="8" width="1" height="1" fill="#a0a0a0"/><rect x="10" y="8" width="1" height="1" fill="#ffffff"/><rect x="1" y="9" width="1" height="1" fill="#a0a0a0"/><rect x="10" y="9" width="1" height="1" fill="#ffffff"/><rect x="2" y="10" width="1" height="1" fill="#ffffff"/><rect x="3" y="10" width="1" height="1" fill="#ffffff"/><rect x="8" y="10" width="1" height="1" fill="#ffffff"/><rect x="9" y="10" width="1" height="1" fill="#ffffff"/><rect x="4" y="11" width="1" height="1" fill="#ffffff"/><rect x="5" y="11" width="1" height="1" fill="#ffffff"/><rect x="6" y="11" width="1" height="1" fill="#ffffff"/><rect x="7" y="11" width="1" height="1" fill="#ffffff"/><rect x="4" y="1" width="1" height="1" fill="#696969"/><rect x="5" y="1" width="1" height="1" fill="#696969"/><rect x="6" y="1" width="1" height="1" fill="#696969"/><rect x="7" y="1" width="1" height="1" fill="#696969"/><rect x="2" y="2" width="1" height="1" fill="#696969"/><rect x="3" y="2" width="1" height="1" fill="#696969"/><rect x="8" y="2" width="1" height="1" fill="#696969"/><rect x="9" y="2" width="1" height="1" fill="#e3e3e3"/><rect x="2" y="3" width="1" height="1" fill="#696969"/><rect x="9" y="3" width="1" height="1" fill="#e3e3e3"/><rect x="1" y="4" width="1" height="1" fill="#696969"/><rect x="10" y="4" width="1" height="1" fill="#e3e3e3"/><rect x="1" y="5" width="1" height="1" fill="#696969"/><rect x="10" y="5" width="1" height="1" fill="#e3e3e3"/><rect x="1" y="6" width="1" height="1" fill="#696969"/><rect x="10" y="6" width="1" height="1" fill="#e3e3e3"/><rect x="1" y="7" width="1" height="1" fill="#696969"/><rect x="10" y="7" width="1" height="1" fill="#e3e3e3"/><rect x="2" y="8" width="1" height="1" fill="#696969"/><rect x="9" y="8" width="1" height="1" fill="#e3e3e3"/><rect x="2" y="9" width="1" height="1" fill="#e3e3e3"/><rect x="3" y="9" width="1" height="1" fill="#e3e3e3"/><rect x="8" y="9" width="1" height="1" fill="#e3e3e3"/><rect x="9" y="9" width="1" height="1" fill="#e3e3e3"/><rect x="4" y="10" width="1" height="1" fill="#e3e3e3"/><rect x="5" y="10" width="1" height="1" fill="#e3e3e3"/><rect x="6" y="10" width="1" height="1" fill="#e3e3e3"/><rect x="7" y="10" width="1" height="1" fill="#e3e3e3"/></svg></div>
<div class="t" style="left:417px;top:223px">Exact Stop</div>
<div class="gb" style="left:259px;top:255px;width:116px;height:27px"></div>
<div class="t gt" style="left:266px;top:250px">Distance Mode</div>
<div class="rb" style="left:269px;top:263px"><svg width="12" height="12" shape-rendering="crispEdges"><rect x="4" y="2" width="4" height="1" fill="#fff"/><rect x="3" y="3" width="6" height="1" fill="#fff"/><rect x="2" y="4" width="8" height="1" fill="#fff"/><rect x="2" y="5" width="8" height="1" fill="#fff"/><rect x="2" y="6" width="8" height="1" fill="#fff"/><rect x="2" y="7" width="8" height="1" fill="#fff"/><rect x="3" y="8" width="6" height="1" fill="#fff"/><rect x="4" y="9" width="4" height="1" fill="#fff"/><rect x="4" y="0" width="1" height="1" fill="#a0a0a0"/><rect x="5" y="0" width="1" height="1" fill="#a0a0a0"/><rect x="6" y="0" width="1" height="1" fill="#a0a0a0"/><rect x="7" y="0" width="1" height="1" fill="#a0a0a0"/><rect x="2" y="1" width="1" height="1" fill="#a0a0a0"/><rect x="3" y="1" width="1" height="1" fill="#a0a0a0"/><rect x="8" y="1" width="1" height="1" fill="#a0a0a0"/><rect x="9" y="1" width="1" height="1" fill="#a0a0a0"/><rect x="1" y="2" width="1" height="1" fill="#a0a0a0"/><rect x="10" y="2" width="1" height="1" fill="#ffffff"/><rect x="1" y="3" width="1" height="1" fill="#a0a0a0"/><rect x="10" y="3" width="1" height="1" fill="#ffffff"/><rect x="0" y="4" width="1" height="1" fill="#a0a0a0"/><rect x="11" y="4" width="1" height="1" fill="#ffffff"/><rect x="0" y="5" width="1" height="1" fill="#a0a0a0"/><rect x="11" y="5" width="1" height="1" fill="#ffffff"/><rect x="0" y="6" width="1" height="1" fill="#a0a0a0"/><rect x="11" y="6" width="1" height="1" fill="#ffffff"/><rect x="0" y="7" width="1" height="1" fill="#a0a0a0"/><rect x="11" y="7" width="1" height="1" fill="#ffffff"/><rect x="1" y="8" width="1" height="1" fill="#a0a0a0"/><rect x="10" y="8" width="1" height="1" fill="#ffffff"/><rect x="1" y="9" width="1" height="1" fill="#a0a0a0"/><rect x="10" y="9" width="1" height="1" fill="#ffffff"/><rect x="2" y="10" width="1" height="1" fill="#ffffff"/><rect x="3" y="10" width="1" height="1" fill="#ffffff"/><rect x="8" y="10" width="1" height="1" fill="#ffffff"/><rect x="9" y="10" width="1" height="1" fill="#ffffff"/><rect x="4" y="11" width="1" height="1" fill="#ffffff"/><rect x="5" y="11" width="1" height="1" fill="#ffffff"/><rect x="6" y="11" width="1" height="1" fill="#ffffff"/><rect x="7" y="11" width="1" height="1" fill="#ffffff"/><rect x="4" y="1" width="1" height="1" fill="#696969"/><rect x="5" y="1" width="1" height="1" fill="#696969"/><rect x="6" y="1" width="1" height="1" fill="#696969"/><rect x="7" y="1" width="1" height="1" fill="#696969"/><rect x="2" y="2" width="1" height="1" fill="#696969"/><rect x="3" y="2" width="1" height="1" fill="#696969"/><rect x="8" y="2" width="1" height="1" fill="#696969"/><rect x="9" y="2" width="1" height="1" fill="#e3e3e3"/><rect x="2" y="3" width="1" height="1" fill="#696969"/><rect x="9" y="3" width="1" height="1" fill="#e3e3e3"/><rect x="1" y="4" width="1" height="1" fill="#696969"/><rect x="10" y="4" width="1" height="1" fill="#e3e3e3"/><rect x="1" y="5" width="1" height="1" fill="#696969"/><rect x="10" y="5" width="1" height="1" fill="#e3e3e3"/><rect x="1" y="6" width="1" height="1" fill="#696969"/><rect x="10" y="6" width="1" height="1" fill="#e3e3e3"/><rect x="1" y="7" width="1" height="1" fill="#696969"/><rect x="10" y="7" width="1" height="1" fill="#e3e3e3"/><rect x="2" y="8" width="1" height="1" fill="#696969"/><rect x="9" y="8" width="1" height="1" fill="#e3e3e3"/><rect x="2" y="9" width="1" height="1" fill="#e3e3e3"/><rect x="3" y="9" width="1" height="1" fill="#e3e3e3"/><rect x="8" y="9" width="1" height="1" fill="#e3e3e3"/><rect x="9" y="9" width="1" height="1" fill="#e3e3e3"/><rect x="4" y="10" width="1" height="1" fill="#e3e3e3"/><rect x="5" y="10" width="1" height="1" fill="#e3e3e3"/><rect x="6" y="10" width="1" height="1" fill="#e3e3e3"/><rect x="7" y="10" width="1" height="1" fill="#e3e3e3"/><path d="M5 4h2v1h1v2h-1v1h-2v-1h-1v-2h1z" fill="#000"/></svg></div>
<div class="t" style="left:286px;top:264px">Absolute</div>
<div class="rb" style="left:337px;top:263px"><svg width="12" height="12" shape-rendering="crispEdges"><rect x="4" y="2" width="4" height="1" fill="#fff"/><rect x="3" y="3" width="6" height="1" fill="#fff"/><rect x="2" y="4" width="8" height="1" fill="#fff"/><rect x="2" y="5" width="8" height="1" fill="#fff"/><rect x="2" y="6" width="8" height="1" fill="#fff"/><rect x="2" y="7" width="8" height="1" fill="#fff"/><rect x="3" y="8" width="6" height="1" fill="#fff"/><rect x="4" y="9" width="4" height="1" fill="#fff"/><rect x="4" y="0" width="1" height="1" fill="#a0a0a0"/><rect x="5" y="0" width="1" height="1" fill="#a0a0a0"/><rect x="6" y="0" width="1" height="1" fill="#a0a0a0"/><rect x="7" y="0" width="1" height="1" fill="#a0a0a0"/><rect x="2" y="1" width="1" height="1" fill="#a0a0a0"/><rect x="3" y="1" width="1" height="1" fill="#a0a0a0"/><rect x="8" y="1" width="1" height="1" fill="#a0a0a0"/><rect x="9" y="1" width="1" height="1" fill="#a0a0a0"/><rect x="1" y="2" width="1" height="1" fill="#a0a0a0"/><rect x="10" y="2" width="1" height="1" fill="#ffffff"/><rect x="1" y="3" width="1" height="1" fill="#a0a0a0"/><rect x="10" y="3" width="1" height="1" fill="#ffffff"/><rect x="0" y="4" width="1" height="1" fill="#a0a0a0"/><rect x="11" y="4" width="1" height="1" fill="#ffffff"/><rect x="0" y="5" width="1" height="1" fill="#a0a0a0"/><rect x="11" y="5" width="1" height="1" fill="#ffffff"/><rect x="0" y="6" width="1" height="1" fill="#a0a0a0"/><rect x="11" y="6" width="1" height="1" fill="#ffffff"/><rect x="0" y="7" width="1" height="1" fill="#a0a0a0"/><rect x="11" y="7" width="1" height="1" fill="#ffffff"/><rect x="1" y="8" width="1" height="1" fill="#a0a0a0"/><rect x="10" y="8" width="1" height="1" fill="#ffffff"/><rect x="1" y="9" width="1" height="1" fill="#a0a0a0"/><rect x="10" y="9" width="1" height="1" fill="#ffffff"/><rect x="2" y="10" width="1" height="1" fill="#ffffff"/><rect x="3" y="10" width="1" height="1" fill="#ffffff"/><rect x="8" y="10" width="1" height="1" fill="#ffffff"/><rect x="9" y="10" width="1" height="1" fill="#ffffff"/><rect x="4" y="11" width="1" height="1" fill="#ffffff"/><rect x="5" y="11" width="1" height="1" fill="#ffffff"/><rect x="6" y="11" width="1" height="1" fill="#ffffff"/><rect x="7" y="11" width="1" height="1" fill="#ffffff"/><rect x="4" y="1" width="1" height="1" fill="#696969"/><rect x="5" y="1" width="1" height="1" fill="#696969"/><rect x="6" y="1" width="1" height="1" fill="#696969"/><rect x="7" y="1" width="1" height="1" fill="#696969"/><rect x="2" y="2" width="1" height="1" fill="#696969"/><rect x="3" y="2" width="1" height="1" fill="#696969"/><rect x="8" y="2" width="1" height="1" fill="#696969"/><rect x="9" y="2" width="1" height="1" fill="#e3e3e3"/><rect x="2" y="3" width="1" height="1" fill="#696969"/><rect x="9" y="3" width="1" height="1" fill="#e3e3e3"/><rect x="1" y="4" width="1" height="1" fill="#696969"/><rect x="10" y="4" width="1" height="1" fill="#e3e3e3"/><rect x="1" y="5" width="1" height="1" fill="#696969"/><rect x="10" y="5" width="1" height="1" fill="#e3e3e3"/><rect x="1" y="6" width="1" height="1" fill="#696969"/><rect x="10" y="6" width="1" height="1" fill="#e3e3e3"/><rect x="1" y="7" width="1" height="1" fill="#696969"/><rect x="10" y="7" width="1" height="1" fill="#e3e3e3"/><rect x="2" y="8" width="1" height="1" fill="#696969"/><rect x="9" y="8" width="1" height="1" fill="#e3e3e3"/><rect x="2" y="9" width="1" height="1" fill="#e3e3e3"/><rect x="3" y="9" width="1" height="1" fill="#e3e3e3"/><rect x="8" y="9" width="1" height="1" fill="#e3e3e3"/><rect x="9" y="9" width="1" height="1" fill="#e3e3e3"/><rect x="4" y="10" width="1" height="1" fill="#e3e3e3"/><rect x="5" y="10" width="1" height="1" fill="#e3e3e3"/><rect x="6" y="10" width="1" height="1" fill="#e3e3e3"/><rect x="7" y="10" width="1" height="1" fill="#e3e3e3"/></svg></div>
<div class="t" style="left:354px;top:264px">Inc</div>
<div class="gb" style="left:378px;top:255px;width:122px;height:27px"></div>
<div class="t gt" style="left:386px;top:250px">IJ Mode</div>
<div class="rb" style="left:386px;top:263px"><svg width="12" height="12" shape-rendering="crispEdges"><rect x="4" y="2" width="4" height="1" fill="#fff"/><rect x="3" y="3" width="6" height="1" fill="#fff"/><rect x="2" y="4" width="8" height="1" fill="#fff"/><rect x="2" y="5" width="8" height="1" fill="#fff"/><rect x="2" y="6" width="8" height="1" fill="#fff"/><rect x="2" y="7" width="8" height="1" fill="#fff"/><rect x="3" y="8" width="6" height="1" fill="#fff"/><rect x="4" y="9" width="4" height="1" fill="#fff"/><rect x="4" y="0" width="1" height="1" fill="#a0a0a0"/><rect x="5" y="0" width="1" height="1" fill="#a0a0a0"/><rect x="6" y="0" width="1" height="1" fill="#a0a0a0"/><rect x="7" y="0" width="1" height="1" fill="#a0a0a0"/><rect x="2" y="1" width="1" height="1" fill="#a0a0a0"/><rect x="3" y="1" width="1" height="1" fill="#a0a0a0"/><rect x="8" y="1" width="1" height="1" fill="#a0a0a0"/><rect x="9" y="1" width="1" height="1" fill="#a0a0a0"/><rect x="1" y="2" width="1" height="1" fill="#a0a0a0"/><rect x="10" y="2" width="1" height="1" fill="#ffffff"/><rect x="1" y="3" width="1" height="1" fill="#a0a0a0"/><rect x="10" y="3" width="1" height="1" fill="#ffffff"/><rect x="0" y="4" width="1" height="1" fill="#a0a0a0"/><rect x="11" y="4" width="1" height="1" fill="#ffffff"/><rect x="0" y="5" width="1" height="1" fill="#a0a0a0"/><rect x="11" y="5" width="1" height="1" fill="#ffffff"/><rect x="0" y="6" width="1" height="1" fill="#a0a0a0"/><rect x="11" y="6" width="1" height="1" fill="#ffffff"/><rect x="0" y="7" width="1" height="1" fill="#a0a0a0"/><rect x="11" y="7" width="1" height="1" fill="#ffffff"/><rect x="1" y="8" width="1" height="1" fill="#a0a0a0"/><rect x="10" y="8" width="1" height="1" fill="#ffffff"/><rect x="1" y="9" width="1" height="1" fill="#a0a0a0"/><rect x="10" y="9" width="1" height="1" fill="#ffffff"/><rect x="2" y="10" width="1" height="1" fill="#ffffff"/><rect x="3" y="10" width="1" height="1" fill="#ffffff"/><rect x="8" y="10" width="1" height="1" fill="#ffffff"/><rect x="9" y="10" width="1" height="1" fill="#ffffff"/><rect x="4" y="11" width="1" height="1" fill="#ffffff"/><rect x="5" y="11" width="1" height="1" fill="#ffffff"/><rect x="6" y="11" width="1" height="1" fill="#ffffff"/><rect x="7" y="11" width="1" height="1" fill="#ffffff"/><rect x="4" y="1" width="1" height="1" fill="#696969"/><rect x="5" y="1" width="1" height="1" fill="#696969"/><rect x="6" y="1" width="1" height="1" fill="#696969"/><rect x="7" y="1" width="1" height="1" fill="#696969"/><rect x="2" y="2" width="1" height="1" fill="#696969"/><rect x="3" y="2" width="1" height="1" fill="#696969"/><rect x="8" y="2" width="1" height="1" fill="#696969"/><rect x="9" y="2" width="1" height="1" fill="#e3e3e3"/><rect x="2" y="3" width="1" height="1" fill="#696969"/><rect x="9" y="3" width="1" height="1" fill="#e3e3e3"/><rect x="1" y="4" width="1" height="1" fill="#696969"/><rect x="10" y="4" width="1" height="1" fill="#e3e3e3"/><rect x="1" y="5" width="1" height="1" fill="#696969"/><rect x="10" y="5" width="1" height="1" fill="#e3e3e3"/><rect x="1" y="6" width="1" height="1" fill="#696969"/><rect x="10" y="6" width="1" height="1" fill="#e3e3e3"/><rect x="1" y="7" width="1" height="1" fill="#696969"/><rect x="10" y="7" width="1" height="1" fill="#e3e3e3"/><rect x="2" y="8" width="1" height="1" fill="#696969"/><rect x="9" y="8" width="1" height="1" fill="#e3e3e3"/><rect x="2" y="9" width="1" height="1" fill="#e3e3e3"/><rect x="3" y="9" width="1" height="1" fill="#e3e3e3"/><rect x="8" y="9" width="1" height="1" fill="#e3e3e3"/><rect x="9" y="9" width="1" height="1" fill="#e3e3e3"/><rect x="4" y="10" width="1" height="1" fill="#e3e3e3"/><rect x="5" y="10" width="1" height="1" fill="#e3e3e3"/><rect x="6" y="10" width="1" height="1" fill="#e3e3e3"/><rect x="7" y="10" width="1" height="1" fill="#e3e3e3"/></svg></div>
<div class="t" style="left:402px;top:264px">Absolute</div>
<div class="rb" style="left:454px;top:263px"><svg width="12" height="12" shape-rendering="crispEdges"><rect x="4" y="2" width="4" height="1" fill="#fff"/><rect x="3" y="3" width="6" height="1" fill="#fff"/><rect x="2" y="4" width="8" height="1" fill="#fff"/><rect x="2" y="5" width="8" height="1" fill="#fff"/><rect x="2" y="6" width="8" height="1" fill="#fff"/><rect x="2" y="7" width="8" height="1" fill="#fff"/><rect x="3" y="8" width="6" height="1" fill="#fff"/><rect x="4" y="9" width="4" height="1" fill="#fff"/><rect x="4" y="0" width="1" height="1" fill="#a0a0a0"/><rect x="5" y="0" width="1" height="1" fill="#a0a0a0"/><rect x="6" y="0" width="1" height="1" fill="#a0a0a0"/><rect x="7" y="0" width="1" height="1" fill="#a0a0a0"/><rect x="2" y="1" width="1" height="1" fill="#a0a0a0"/><rect x="3" y="1" width="1" height="1" fill="#a0a0a0"/><rect x="8" y="1" width="1" height="1" fill="#a0a0a0"/><rect x="9" y="1" width="1" height="1" fill="#a0a0a0"/><rect x="1" y="2" width="1" height="1" fill="#a0a0a0"/><rect x="10" y="2" width="1" height="1" fill="#ffffff"/><rect x="1" y="3" width="1" height="1" fill="#a0a0a0"/><rect x="10" y="3" width="1" height="1" fill="#ffffff"/><rect x="0" y="4" width="1" height="1" fill="#a0a0a0"/><rect x="11" y="4" width="1" height="1" fill="#ffffff"/><rect x="0" y="5" width="1" height="1" fill="#a0a0a0"/><rect x="11" y="5" width="1" height="1" fill="#ffffff"/><rect x="0" y="6" width="1" height="1" fill="#a0a0a0"/><rect x="11" y="6" width="1" height="1" fill="#ffffff"/><rect x="0" y="7" width="1" height="1" fill="#a0a0a0"/><rect x="11" y="7" width="1" height="1" fill="#ffffff"/><rect x="1" y="8" width="1" height="1" fill="#a0a0a0"/><rect x="10" y="8" width="1" height="1" fill="#ffffff"/><rect x="1" y="9" width="1" height="1" fill="#a0a0a0"/><rect x="10" y="9" width="1" height="1" fill="#ffffff"/><rect x="2" y="10" width="1" height="1" fill="#ffffff"/><rect x="3" y="10" width="1" height="1" fill="#ffffff"/><rect x="8" y="10" width="1" height="1" fill="#ffffff"/><rect x="9" y="10" width="1" height="1" fill="#ffffff"/><rect x="4" y="11" width="1" height="1" fill="#ffffff"/><rect x="5" y="11" width="1" height="1" fill="#ffffff"/><rect x="6" y="11" width="1" height="1" fill="#ffffff"/><rect x="7" y="11" width="1" height="1" fill="#ffffff"/><rect x="4" y="1" width="1" height="1" fill="#696969"/><rect x="5" y="1" width="1" height="1" fill="#696969"/><rect x="6" y="1" width="1" height="1" fill="#696969"/><rect x="7" y="1" width="1" height="1" fill="#696969"/><rect x="2" y="2" width="1" height="1" fill="#696969"/><rect x="3" y="2" width="1" height="1" fill="#696969"/><rect x="8" y="2" width="1" height="1" fill="#696969"/><rect x="9" y="2" width="1" height="1" fill="#e3e3e3"/><rect x="2" y="3" width="1" height="1" fill="#696969"/><rect x="9" y="3" width="1" height="1" fill="#e3e3e3"/><rect x="1" y="4" width="1" height="1" fill="#696969"/><rect x="10" y="4" width="1" height="1" fill="#e3e3e3"/><rect x="1" y="5" width="1" height="1" fill="#696969"/><rect x="10" y="5" width="1" height="1" fill="#e3e3e3"/><rect x="1" y="6" width="1" height="1" fill="#696969"/><rect x="10" y="6" width="1" height="1" fill="#e3e3e3"/><rect x="1" y="7" width="1" height="1" fill="#696969"/><rect x="10" y="7" width="1" height="1" fill="#e3e3e3"/><rect x="2" y="8" width="1" height="1" fill="#696969"/><rect x="9" y="8" width="1" height="1" fill="#e3e3e3"/><rect x="2" y="9" width="1" height="1" fill="#e3e3e3"/><rect x="3" y="9" width="1" height="1" fill="#e3e3e3"/><rect x="8" y="9" width="1" height="1" fill="#e3e3e3"/><rect x="9" y="9" width="1" height="1" fill="#e3e3e3"/><rect x="4" y="10" width="1" height="1" fill="#e3e3e3"/><rect x="5" y="10" width="1" height="1" fill="#e3e3e3"/><rect x="6" y="10" width="1" height="1" fill="#e3e3e3"/><rect x="7" y="10" width="1" height="1" fill="#e3e3e3"/><path d="M5 4h2v1h1v2h-1v1h-2v-1h-1v-2h1z" fill="#000"/></svg></div>
<div class="t" style="left:470px;top:264px">Inc</div>
<div class="gb" style="left:309px;top:297px;width:152px;height:29px"></div>
<div class="t gt" style="left:316px;top:292px">Active Plane of Movement</div>
<div class="rb" style="left:322px;top:305px"><svg width="12" height="12" shape-rendering="crispEdges"><rect x="4" y="2" width="4" height="1" fill="#fff"/><rect x="3" y="3" width="6" height="1" fill="#fff"/><rect x="2" y="4" width="8" height="1" fill="#fff"/><rect x="2" y="5" width="8" height="1" fill="#fff"/><rect x="2" y="6" width="8" height="1" fill="#fff"/><rect x="2" y="7" width="8" height="1" fill="#fff"/><rect x="3" y="8" width="6" height="1" fill="#fff"/><rect x="4" y="9" width="4" height="1" fill="#fff"/><rect x="4" y="0" width="1" height="1" fill="#a0a0a0"/><rect x="5" y="0" width="1" height="1" fill="#a0a0a0"/><rect x="6" y="0" width="1" height="1" fill="#a0a0a0"/><rect x="7" y="0" width="1" height="1" fill="#a0a0a0"/><rect x="2" y="1" width="1" height="1" fill="#a0a0a0"/><rect x="3" y="1" width="1" height="1" fill="#a0a0a0"/><rect x="8" y="1" width="1" height="1" fill="#a0a0a0"/><rect x="9" y="1" width="1" height="1" fill="#a0a0a0"/><rect x="1" y="2" width="1" height="1" fill="#a0a0a0"/><rect x="10" y="2" width="1" height="1" fill="#ffffff"/><rect x="1" y="3" width="1" height="1" fill="#a0a0a0"/><rect x="10" y="3" width="1" height="1" fill="#ffffff"/><rect x="0" y="4" width="1" height="1" fill="#a0a0a0"/><rect x="11" y="4" width="1" height="1" fill="#ffffff"/><rect x="0" y="5" width="1" height="1" fill="#a0a0a0"/><rect x="11" y="5" width="1" height="1" fill="#ffffff"/><rect x="0" y="6" width="1" height="1" fill="#a0a0a0"/><rect x="11" y="6" width="1" height="1" fill="#ffffff"/><rect x="0" y="7" width="1" height="1" fill="#a0a0a0"/><rect x="11" y="7" width="1" height="1" fill="#ffffff"/><rect x="1" y="8" width="1" height="1" fill="#a0a0a0"/><rect x="10" y="8" width="1" height="1" fill="#ffffff"/><rect x="1" y="9" width="1" height="1" fill="#a0a0a0"/><rect x="10" y="9" width="1" height="1" fill="#ffffff"/><rect x="2" y="10" width="1" height="1" fill="#ffffff"/><rect x="3" y="10" width="1" height="1" fill="#ffffff"/><rect x="8" y="10" width="1" height="1" fill="#ffffff"/><rect x="9" y="10" width="1" height="1" fill="#ffffff"/><rect x="4" y="11" width="1" height="1" fill="#ffffff"/><rect x="5" y="11" width="1" height="1" fill="#ffffff"/><rect x="6" y="11" width="1" height="1" fill="#ffffff"/><rect x="7" y="11" width="1" height="1" fill="#ffffff"/><rect x="4" y="1" width="1" height="1" fill="#696969"/><rect x="5" y="1" width="1" height="1" fill="#696969"/><rect x="6" y="1" width="1" height="1" fill="#696969"/><rect x="7" y="1" width="1" height="1" fill="#696969"/><rect x="2" y="2" width="1" height="1" fill="#696969"/><rect x="3" y="2" width="1" height="1" fill="#696969"/><rect x="8" y="2" width="1" height="1" fill="#696969"/><rect x="9" y="2" width="1" height="1" fill="#e3e3e3"/><rect x="2" y="3" width="1" height="1" fill="#696969"/><rect x="9" y="3" width="1" height="1" fill="#e3e3e3"/><rect x="1" y="4" width="1" height="1" fill="#696969"/><rect x="10" y="4" width="1" height="1" fill="#e3e3e3"/><rect x="1" y="5" width="1" height="1" fill="#696969"/><rect x="10" y="5" width="1" height="1" fill="#e3e3e3"/><rect x="1" y="6" width="1" height="1" fill="#696969"/><rect x="10" y="6" width="1" height="1" fill="#e3e3e3"/><rect x="1" y="7" width="1" height="1" fill="#696969"/><rect x="10" y="7" width="1" height="1" fill="#e3e3e3"/><rect x="2" y="8" width="1" height="1" fill="#696969"/><rect x="9" y="8" width="1" height="1" fill="#e3e3e3"/><rect x="2" y="9" width="1" height="1" fill="#e3e3e3"/><rect x="3" y="9" width="1" height="1" fill="#e3e3e3"/><rect x="8" y="9" width="1" height="1" fill="#e3e3e3"/><rect x="9" y="9" width="1" height="1" fill="#e3e3e3"/><rect x="4" y="10" width="1" height="1" fill="#e3e3e3"/><rect x="5" y="10" width="1" height="1" fill="#e3e3e3"/><rect x="6" y="10" width="1" height="1" fill="#e3e3e3"/><rect x="7" y="10" width="1" height="1" fill="#e3e3e3"/></svg></div>
<div class="t" style="left:341px;top:306px">X-Y</div>
<div class="rb" style="left:370px;top:305px"><svg width="12" height="12" shape-rendering="crispEdges"><rect x="4" y="2" width="4" height="1" fill="#fff"/><rect x="3" y="3" width="6" height="1" fill="#fff"/><rect x="2" y="4" width="8" height="1" fill="#fff"/><rect x="2" y="5" width="8" height="1" fill="#fff"/><rect x="2" y="6" width="8" height="1" fill="#fff"/><rect x="2" y="7" width="8" height="1" fill="#fff"/><rect x="3" y="8" width="6" height="1" fill="#fff"/><rect x="4" y="9" width="4" height="1" fill="#fff"/><rect x="4" y="0" width="1" height="1" fill="#a0a0a0"/><rect x="5" y="0" width="1" height="1" fill="#a0a0a0"/><rect x="6" y="0" width="1" height="1" fill="#a0a0a0"/><rect x="7" y="0" width="1" height="1" fill="#a0a0a0"/><rect x="2" y="1" width="1" height="1" fill="#a0a0a0"/><rect x="3" y="1" width="1" height="1" fill="#a0a0a0"/><rect x="8" y="1" width="1" height="1" fill="#a0a0a0"/><rect x="9" y="1" width="1" height="1" fill="#a0a0a0"/><rect x="1" y="2" width="1" height="1" fill="#a0a0a0"/><rect x="10" y="2" width="1" height="1" fill="#ffffff"/><rect x="1" y="3" width="1" height="1" fill="#a0a0a0"/><rect x="10" y="3" width="1" height="1" fill="#ffffff"/><rect x="0" y="4" width="1" height="1" fill="#a0a0a0"/><rect x="11" y="4" width="1" height="1" fill="#ffffff"/><rect x="0" y="5" width="1" height="1" fill="#a0a0a0"/><rect x="11" y="5" width="1" height="1" fill="#ffffff"/><rect x="0" y="6" width="1" height="1" fill="#a0a0a0"/><rect x="11" y="6" width="1" height="1" fill="#ffffff"/><rect x="0" y="7" width="1" height="1" fill="#a0a0a0"/><rect x="11" y="7" width="1" height="1" fill="#ffffff"/><rect x="1" y="8" width="1" height="1" fill="#a0a0a0"/><rect x="10" y="8" width="1" height="1" fill="#ffffff"/><rect x="1" y="9" width="1" height="1" fill="#a0a0a0"/><rect x="10" y="9" width="1" height="1" fill="#ffffff"/><rect x="2" y="10" width="1" height="1" fill="#ffffff"/><rect x="3" y="10" width="1" height="1" fill="#ffffff"/><rect x="8" y="10" width="1" height="1" fill="#ffffff"/><rect x="9" y="10" width="1" height="1" fill="#ffffff"/><rect x="4" y="11" width="1" height="1" fill="#ffffff"/><rect x="5" y="11" width="1" height="1" fill="#ffffff"/><rect x="6" y="11" width="1" height="1" fill="#ffffff"/><rect x="7" y="11" width="1" height="1" fill="#ffffff"/><rect x="4" y="1" width="1" height="1" fill="#696969"/><rect x="5" y="1" width="1" height="1" fill="#696969"/><rect x="6" y="1" width="1" height="1" fill="#696969"/><rect x="7" y="1" width="1" height="1" fill="#696969"/><rect x="2" y="2" width="1" height="1" fill="#696969"/><rect x="3" y="2" width="1" height="1" fill="#696969"/><rect x="8" y="2" width="1" height="1" fill="#696969"/><rect x="9" y="2" width="1" height="1" fill="#e3e3e3"/><rect x="2" y="3" width="1" height="1" fill="#696969"/><rect x="9" y="3" width="1" height="1" fill="#e3e3e3"/><rect x="1" y="4" width="1" height="1" fill="#696969"/><rect x="10" y="4" width="1" height="1" fill="#e3e3e3"/><rect x="1" y="5" width="1" height="1" fill="#696969"/><rect x="10" y="5" width="1" height="1" fill="#e3e3e3"/><rect x="1" y="6" width="1" height="1" fill="#696969"/><rect x="10" y="6" width="1" height="1" fill="#e3e3e3"/><rect x="1" y="7" width="1" height="1" fill="#696969"/><rect x="10" y="7" width="1" height="1" fill="#e3e3e3"/><rect x="2" y="8" width="1" height="1" fill="#696969"/><rect x="9" y="8" width="1" height="1" fill="#e3e3e3"/><rect x="2" y="9" width="1" height="1" fill="#e3e3e3"/><rect x="3" y="9" width="1" height="1" fill="#e3e3e3"/><rect x="8" y="9" width="1" height="1" fill="#e3e3e3"/><rect x="9" y="9" width="1" height="1" fill="#e3e3e3"/><rect x="4" y="10" width="1" height="1" fill="#e3e3e3"/><rect x="5" y="10" width="1" height="1" fill="#e3e3e3"/><rect x="6" y="10" width="1" height="1" fill="#e3e3e3"/><rect x="7" y="10" width="1" height="1" fill="#e3e3e3"/></svg></div>
<div class="t" style="left:386px;top:306px">Y-Z</div>
<div class="rb" style="left:418px;top:305px"><svg width="12" height="12" shape-rendering="crispEdges"><rect x="4" y="2" width="4" height="1" fill="#fff"/><rect x="3" y="3" width="6" height="1" fill="#fff"/><rect x="2" y="4" width="8" height="1" fill="#fff"/><rect x="2" y="5" width="8" height="1" fill="#fff"/><rect x="2" y="6" width="8" height="1" fill="#fff"/><rect x="2" y="7" width="8" height="1" fill="#fff"/><rect x="3" y="8" width="6" height="1" fill="#fff"/><rect x="4" y="9" width="4" height="1" fill="#fff"/><rect x="4" y="0" width="1" height="1" fill="#a0a0a0"/><rect x="5" y="0" width="1" height="1" fill="#a0a0a0"/><rect x="6" y="0" width="1" height="1" fill="#a0a0a0"/><rect x="7" y="0" width="1" height="1" fill="#a0a0a0"/><rect x="2" y="1" width="1" height="1" fill="#a0a0a0"/><rect x="3" y="1" width="1" height="1" fill="#a0a0a0"/><rect x="8" y="1" width="1" height="1" fill="#a0a0a0"/><rect x="9" y="1" width="1" height="1" fill="#a0a0a0"/><rect x="1" y="2" width="1" height="1" fill="#a0a0a0"/><rect x="10" y="2" width="1" height="1" fill="#ffffff"/><rect x="1" y="3" width="1" height="1" fill="#a0a0a0"/><rect x="10" y="3" width="1" height="1" fill="#ffffff"/><rect x="0" y="4" width="1" height="1" fill="#a0a0a0"/><rect x="11" y="4" width="1" height="1" fill="#ffffff"/><rect x="0" y="5" width="1" height="1" fill="#a0a0a0"/><rect x="11" y="5" width="1" height="1" fill="#ffffff"/><rect x="0" y="6" width="1" height="1" fill="#a0a0a0"/><rect x="11" y="6" width="1" height="1" fill="#ffffff"/><rect x="0" y="7" width="1" height="1" fill="#a0a0a0"/><rect x="11" y="7" width="1" height="1" fill="#ffffff"/><rect x="1" y="8" width="1" height="1" fill="#a0a0a0"/><rect x="10" y="8" width="1" height="1" fill="#ffffff"/><rect x="1" y="9" width="1" height="1" fill="#a0a0a0"/><rect x="10" y="9" width="1" height="1" fill="#ffffff"/><rect x="2" y="10" width="1" height="1" fill="#ffffff"/><rect x="3" y="10" width="1" height="1" fill="#ffffff"/><rect x="8" y="10" width="1" height="1" fill="#ffffff"/><rect x="9" y="10" width="1" height="1" fill="#ffffff"/><rect x="4" y="11" width="1" height="1" fill="#ffffff"/><rect x="5" y="11" width="1" height="1" fill="#ffffff"/><rect x="6" y="11" width="1" height="1" fill="#ffffff"/><rect x="7" y="11" width="1" height="1" fill="#ffffff"/><rect x="4" y="1" width="1" height="1" fill="#696969"/><rect x="5" y="1" width="1" height="1" fill="#696969"/><rect x="6" y="1" width="1" height="1" fill="#696969"/><rect x="7" y="1" width="1" height="1" fill="#696969"/><rect x="2" y="2" width="1" height="1" fill="#696969"/><rect x="3" y="2" width="1" height="1" fill="#696969"/><rect x="8" y="2" width="1" height="1" fill="#696969"/><rect x="9" y="2" width="1" height="1" fill="#e3e3e3"/><rect x="2" y="3" width="1" height="1" fill="#696969"/><rect x="9" y="3" width="1" height="1" fill="#e3e3e3"/><rect x="1" y="4" width="1" height="1" fill="#696969"/><rect x="10" y="4" width="1" height="1" fill="#e3e3e3"/><rect x="1" y="5" width="1" height="1" fill="#696969"/><rect x="10" y="5" width="1" height="1" fill="#e3e3e3"/><rect x="1" y="6" width="1" height="1" fill="#696969"/><rect x="10" y="6" width="1" height="1" fill="#e3e3e3"/><rect x="1" y="7" width="1" height="1" fill="#696969"/><rect x="10" y="7" width="1" height="1" fill="#e3e3e3"/><rect x="2" y="8" width="1" height="1" fill="#696969"/><rect x="9" y="8" width="1" height="1" fill="#e3e3e3"/><rect x="2" y="9" width="1" height="1" fill="#e3e3e3"/><rect x="3" y="9" width="1" height="1" fill="#e3e3e3"/><rect x="8" y="9" width="1" height="1" fill="#e3e3e3"/><rect x="9" y="9" width="1" height="1" fill="#e3e3e3"/><rect x="4" y="10" width="1" height="1" fill="#e3e3e3"/><rect x="5" y="10" width="1" height="1" fill="#e3e3e3"/><rect x="6" y="10" width="1" height="1" fill="#e3e3e3"/><rect x="7" y="10" width="1" height="1" fill="#e3e3e3"/><path d="M5 4h2v1h1v2h-1v1h-2v-1h-1v-2h1z" fill="#000"/></svg></div>
<div class="t" style="left:434px;top:306px">X-Z</div>
<div class="gb" style="left:252px;top:348px;width:262px;height:242px"></div>
<div class="t gt" style="left:259px;top:343px">Jog Increments in Cycle Mode</div>
<div class="ed" style="left:378px;top:366px;width:43px;height:19px;background:#fff"><div class="edi"></div></div>
<div class="t" style="left:382px;top:370px">1</div>
<div class="ed" style="left:378px;top:387px;width:43px;height:19px;background:#fff"><div class="edi"></div></div>
<div class="t" style="left:382px;top:391px">0.1</div>
<div class="ed" style="left:378px;top:408px;width:43px;height:19px;background:#fff"><div class="edi"></div></div>
<div class="t" style="left:382px;top:412px">0.01</div>
<div class="ed" style="left:378px;top:431px;width:43px;height:19px;background:#fff"><div class="edi"></div></div>
<div class="t" style="left:382px;top:435px">0.001</div>
<div class="ed" style="left:378px;top:452px;width:43px;height:19px;background:#fff"><div class="edi"></div></div>
<div class="t" style="left:382px;top:456px">0.0001</div>
<div class="ed" style="left:378px;top:473px;width:43px;height:19px;background:#fff"><div class="edi"></div></div>
<div class="t" style="left:382px;top:477px">1</div>
<div class="ed" style="left:378px;top:494px;width:43px;height:19px;background:#fff"><div class="edi"></div></div>
<div class="t" style="left:382px;top:498px">0.1</div>
<div class="ed" style="left:378px;top:513px;width:43px;height:19px;background:#fff"><div class="edi"></div></div>
<div class="t" style="left:382px;top:517px">0.01</div>
<div class="ed" style="left:378px;top:535px;width:43px;height:19px;background:#fff"><div class="edi"></div></div>
<div class="t" style="left:382px;top:539px">0.001</div>
<div class="ed" style="left:378px;top:556px;width:43px;height:19px;background:#fff"><div class="edi"></div></div>
<div class="t" style="left:382px;top:560px">0.0001</div>
<div class="t" style="left:325px;top:370px">Position 1</div>
<div class="t" style="left:318px;top:448px">Use 999 to</div>
<div class="t" style="left:318px;top:466px">indicate a</div>
<div class="t" style="left:309px;top:484px">Continous Jog</div>
<div class="t" style="left:318px;top:500px">selection.</div>
<div class="t" style="left:318px;top:562px">Position 10</div>
<div class="gb" style="left:526px;top:58px;width:224px;height:66px"></div>
<div class="t gt" style="left:533px;top:53px">Shuttle Wheel Setting</div>
<div class="t" style="left:543px;top:73px">Shuttle Accel.</div>
<div class="ed" style="left:546px;top:91px;width:60px;height:20px;background:#fff"><div class="edi"></div></div>
<div class="t" style="left:549px;top:95px">1</div>
<div class="t" style="left:615px;top:92px">Seconds</div>
<div class="gb" style="left:759px;top:58px;width:224px;height:66px"></div>
<div class="t gt" style="left:766px;top:53px">Inputs Signal Debouncing/Noise rejection</div>
<div class="t" style="left:762px;top:75px">Debounce Interval:</div>
<div class="ed" style="left:853px;top:69px;width:47px;height:20px;background:#fff"><div class="edi"></div></div>
<div class="t" style="left:856px;top:73px">500</div>
<div class="t" style="left:762px;top:97px">Index Debounce</div>
<div class="ed" style="left:853px;top:95px;width:47px;height:20px;background:#fff"><div class="edi"></div></div>
<div class="t" style="left:856px;top:99px">100</div>
<div class="t" style="left:910px;top:84px">x 40us</div>
<div class="hl" style="left:532px;top:132px;width:457px"></div>
<div class="vl" style="left:532px;top:132px;height:350px"></div>
<div class="vl" style="left:988px;top:132px;height:329px"></div>
<div class="t gt" style="left:539px;top:127px">General Configuration</div>
<div class="cb" style="left:541px;top:146px"><div class="cbi"></div></div>
<div class="t" style="left:559px;top:147px">Z is 2.5D on Output #6</div>
<div class="cb" style="left:541px;top:164px"><div class="cbi"></div><svg width="7" height="7" style="position:absolute;left:3px;top:3px" shape-rendering="crispEdges"><path d="M6 0h1v3h-1zM5 1h1v3h-1zM4 2h1v3h-1zM3 3h1v3h-1zM2 4h1v3h-1zM1 3h1v3h-1zM0 2h1v3h-1z" fill="#000"/></svg></div>
<div class="t" style="left:559px;top:165px">Home Sw. Safety</div>
<div class="cb" style="left:541px;top:203px"><div class="cbi"></div></div>
<div class="t" style="left:559px;top:204px">Ignore M calls while loading</div>
<div class="cb" style="left:541px;top:221px"><div class="cbi"></div></div>
<div class="t" style="left:559px;top:222px">M9- Execute after Block</div>
<div class="cb" style="left:541px;top:240px"><div class="cbi"></div></div>
<div class="t" style="left:559px;top:241px">UDP Pendent Control</div>
<div class="cb" style="left:541px;top:258px"><div class="cbi"></div></div>
<div class="t" style="left:559px;top:259px">Run Macro Pump</div>
<div class="cb" style="left:541px;top:276px"><div class="cbi"></div></div>
<div class="t" style="left:559px;top:277px">ChargePump On in EStop</div>
<div class="cb" style="left:541px;top:294px"><div class="cbi"></div><svg width="7" height="7" style="position:absolute;left:3px;top:3px" shape-rendering="crispEdges"><path d="M6 0h1v3h-1zM5 1h1v3h-1zM4 2h1v3h-1zM3 3h1v3h-1zM2 4h1v3h-1zM1 3h1v3h-1zM0 2h1v3h-1z" fill="#000"/></svg></div>
<div class="t" style="left:559px;top:295px">Persistent Jog Mode.</div>
<div class="cb" style="left:541px;top:312px"><div class="cbi"></div></div>
<div class="t" style="left:559px;top:313px">FeedOverRide Persist</div>
<div class="cb" style="left:541px;top:328px"><div class="cbi"></div></div>
<div class="t" style="left:559px;top:329px">No System Menu in Mach3</div>
<div class="cb" style="left:541px;top:343px"><div class="cbi"></div></div>
<div class="t" style="left:559px;top:344px">Use Key Clicks</div>
<div class="cb" style="left:541px;top:359px"><div class="cbi"></div></div>
<div class="t" style="left:559px;top:360px">Home Slave with Master Axis</div>
<div class="cb" style="left:541px;top:374px"><div class="cbi"></div></div>
<div class="t" style="left:559px;top:375px">Include TLO in Z from G31</div>
<div class="cb" style="left:541px;top:390px"><div class="cbi"></div><svg width="7" height="7" style="position:absolute;left:3px;top:3px" shape-rendering="crispEdges"><path d="M6 0h1v3h-1zM5 1h1v3h-1zM4 2h1v3h-1zM3 3h1v3h-1zM2 4h1v3h-1zM1 3h1v3h-1zM0 2h1v3h-1z" fill="#000"/></svg></div>
<div class="t" style="left:559px;top:391px">Lock Rapid FRO to Feed FRO</div>
<div class="t" style="left:541px;top:187px">LookAhead</div>
<div class="ed" style="left:604px;top:182px;width:33px;height:19px;background:#fff"><div class="edi"></div></div>
<div class="t" style="left:607px;top:186px">20</div>
<div class="t" style="left:646px;top:187px">Lines</div>
<div class="cb" style="left:744px;top:146px"><div class="cbi"></div></div>
<div class="t" style="left:762px;top:147px">Disable Gouge/Concavity Checks</div>
<div class="cb" style="left:744px;top:164px"><div class="cbi"></div></div>
<div class="t" style="left:762px;top:165px">G04 Dwell in ms</div>
<div class="cb" style="left:744px;top:182px"><div class="cbi"></div><svg width="7" height="7" style="position:absolute;left:3px;top:3px" shape-rendering="crispEdges"><path d="M6 0h1v3h-1zM5 1h1v3h-1zM4 2h1v3h-1zM3 3h1v3h-1zM2 4h1v3h-1zM1 3h1v3h-1zM0 2h1v3h-1z" fill="#000"/></svg></div>
<div class="t" style="left:762px;top:183px">Use WatchDogs</div>
<div class="cb" style="left:744px;top:200px"><div class="cbi"></div></div>
<div class="t" style="left:762px;top:201px">Debug This Run</div>
<div class="cb" style="left:744px;top:219px"><div class="cbi"></div><svg width="7" height="7" style="position:absolute;left:3px;top:3px" shape-rendering="crispEdges"><path d="M6 0h1v3h-1zM5 1h1v3h-1zM4 2h1v3h-1zM3 3h1v3h-1zM2 4h1v3h-1zM1 3h1v3h-1zM0 2h1v3h-1z" fill="#000"/></svg></div>
<div class="t" style="left:762px;top:220px">Enhanced Pulsing</div>
<div class="cb" style="left:744px;top:236px"><div class="cbi"></div></div>
<div class="t" style="left:762px;top:237px">Allow Wave Files</div>
<div class="cb" style="left:744px;top:253px"><div class="cbi"></div></div>
<div class="t" style="left:762px;top:254px">Allow Speech</div>
<div class="cb" style="left:744px;top:271px"><div class="cbi"></div></div>
<div class="t" style="left:762px;top:272px">Set Charge Pump to 5Khz  - Laser Stndby</div>
<div class="cb" style="left:744px;top:304px"><div class="cbi"></div></div>
<div class="t" style="left:762px;top:305px">No FRO on Queue</div>
<div class="cb" style="left:745px;top:287px"><div class="cbi"></div></div>
<div class="t" style="left:763px;top:288px">Use OUTPUT20 as Dwell Trigger</div>
<div class="ed" style="left:747px;top:324px;width:65px;height:20px;background:#fff"><div class="edi"></div></div>
<div class="t" style="left:750px;top:328px">10</div>
<div class="t" style="left:817px;top:328px">Turn Manual Spindle Incr.</div>
<div class="ed" style="left:748px;top:347px;width:65px;height:20px;background:#fff"><div class="edi"></div></div>
<div class="t" style="left:751px;top:351px">10</div>
<div class="t" style="left:819px;top:350px">Spindle OV increment</div>
<div class="gb" style="left:532px;top:411px;width:193px;height:71px"></div>
<div class="t gt" style="left:539px;top:406px">Rotational</div>
<div class="cb" style="left:546px;top:424px"><div class="cbi"></div></div>
<div class="t" style="left:564px;top:425px">Rot 360 rollover</div>
<div class="cb" style="left:546px;top:442px"><div class="cbi"></div><svg width="7" height="7" style="position:absolute;left:3px;top:3px" shape-rendering="crispEdges"><path d="M6 0h1v3h-1zM5 1h1v3h-1zM4 2h1v3h-1zM3 3h1v3h-1zM2 4h1v3h-1zM1 3h1v3h-1zM0 2h1v3h-1z" fill="#000"/></svg></div>
<div class="t" style="left:564px;top:443px">Ang Short Rot on G0</div>
<div class="cb" style="left:546px;top:460px"><div class="cbi"></div><svg width="7" height="7" style="position:absolute;left:3px;top:3px" shape-rendering="crispEdges"><path d="M6 0h1v3h-1zM5 1h1v3h-1zM4 2h1v3h-1zM3 3h1v3h-1zM2 4h1v3h-1zM1 3h1v3h-1zM0 2h1v3h-1z" fill="#000"/></svg></div>
<div class="t" style="left:564px;top:461px">Rotational Soft Limits</div>
<div class="vl" style="left:532px;top:483px;height:12px"></div>
<div class="vl" style="left:724px;top:483px;height:12px"></div>
<div class="gb" style="left:531px;top:494px;width:193px;height:95px"></div>
<div class="t gt" style="left:538px;top:489px">Screen Control</div>
<div class="cb" style="left:544px;top:507px"><div class="cbi"></div></div>
<div class="t" style="left:562px;top:508px">Hi-Res Screens</div>
<div class="cb" style="left:544px;top:525px"><div class="cbi"></div><svg width="7" height="7" style="position:absolute;left:3px;top:3px" shape-rendering="crispEdges"><path d="M6 0h1v3h-1zM5 1h1v3h-1zM4 2h1v3h-1zM3 3h1v3h-1zM2 4h1v3h-1zM1 3h1v3h-1zM0 2h1v3h-1z" fill="#000"/></svg></div>
<div class="t" style="left:562px;top:526px">Boxed DRO's and Graphics</div>
<div class="cb" style="left:544px;top:543px"><div class="cbi"></div></div>
<div class="t" style="left:562px;top:544px">Auto Screen Enlarge</div>
<div class="cb" style="left:544px;top:560px"><div class="cbi"></div><svg width="7" height="7" style="position:absolute;left:3px;top:3px" shape-rendering="crispEdges"><path d="M6 0h1v3h-1zM5 1h1v3h-1zM4 2h1v3h-1zM3 3h1v3h-1zM2 4h1v3h-1zM1 3h1v3h-1zM0 2h1v3h-1z" fill="#000"/></svg></div>
<div class="t" style="left:562px;top:561px">Flash Errors and comments.</div>
<div class="hl" style="left:532px;top:590px;width:457px"></div>
<div class="gb" style="left:729px;top:379px;width:260px;height:82px"></div>
<div class="t gt" style="left:736px;top:374px">CV Control</div>
<div class="cb" style="left:742px;top:387px"><div class="cbi"></div></div>
<div class="t" style="left:760px;top:388px">Plasma Mode</div>
<div class="cb" style="left:742px;top:403px"><div class="cbi"></div><svg width="7" height="7" style="position:absolute;left:3px;top:3px" shape-rendering="crispEdges"><path d="M6 0h1v3h-1zM5 1h1v3h-1zM4 2h1v3h-1zM3 3h1v3h-1zM2 4h1v3h-1zM1 3h1v3h-1zM0 2h1v3h-1z" fill="#000"/></svg></div>
<div class="t" style="left:760px;top:404px">CV Dist Tolerance</div>
<div class="ed" style="left:852px;top:395px;width:59px;height:20px;background:#fff"><div class="edi"></div></div>
<div class="t" style="left:855px;top:399px">180</div>
<div class="t" style="left:921px;top:400px">Units..</div>
<div class="cb" style="left:742px;top:421px"><div class="cbi"></div><svg width="7" height="7" style="position:absolute;left:3px;top:3px" shape-rendering="crispEdges"><path d="M6 0h1v3h-1zM5 1h1v3h-1zM4 2h1v3h-1zM3 3h1v3h-1zM2 4h1v3h-1zM1 3h1v3h-1zM0 2h1v3h-1z" fill="#000"/></svg></div>
<div class="t" style="left:760px;top:422px">G100 Adaptive NurbsCV</div>
<div class="cb" style="left:742px;top:439px"><div class="cbi"></div></div>
<div class="t" style="left:760px;top:440px">Stop CV on angles &gt;</div>
<div class="ed" style="left:864px;top:436px;width:32px;height:20px;background:#fff"><div class="edi"></div></div>
<div class="t" style="left:867px;top:440px">0</div>
<div class="t" style="left:906px;top:439px">Degrees</div>
<div class="hl" style="left:726px;top:468px;width:263px"></div>
<div class="vl" style="left:988px;top:462px;height:129px"></div>
<div class="t gt" style="left:731px;top:463px">Axis DRO Properties</div>
<div class="cb" style="left:751px;top:487px"><div class="cbi"></div></div>
<div class="t" style="left:770px;top:488px">Tool Selections Persistent.</div>
<div class="cb" style="left:753px;top:505px"><div class="cbi"></div><svg width="7" height="7" style="position:absolute;left:3px;top:3px" shape-rendering="crispEdges"><path d="M6 0h1v3h-1zM5 1h1v3h-1zM4 2h1v3h-1zM3 3h1v3h-1zM2 4h1v3h-1zM1 3h1v3h-1zM0 2h1v3h-1z" fill="#000"/></svg></div>
<div class="t" style="left:771px;top:506px">Optional Offset Save</div>
<div class="cb" style="left:753px;top:525px"><div class="cbi"></div><svg width="7" height="7" style="position:absolute;left:3px;top:3px" shape-rendering="crispEdges"><path d="M6 0h1v3h-1zM5 1h1v3h-1zM4 2h1v3h-1zM3 3h1v3h-1zM2 4h1v3h-1zM1 3h1v3h-1zM0 2h1v3h-1z" fill="#000"/></svg></div>
<div class="t" style="left:771px;top:526px">Persistent Offsets</div>
<div class="cb" style="left:753px;top:544px"><div class="cbi"></div><svg width="7" height="7" style="position:absolute;left:3px;top:3px" shape-rendering="crispEdges"><path d="M6 0h1v3h-1zM5 1h1v3h-1zM4 2h1v3h-1zM3 3h1v3h-1zM2 4h1v3h-1zM1 3h1v3h-1zM0 2h1v3h-1z" fill="#000"/></svg></div>
<div class="t" style="left:771px;top:545px">Persistent DROs</div>
<div class="cb" style="left:753px;top:562px"><div class="cbi"></div></div>
<div class="t" style="left:771px;top:563px">Copy G54 from G59.253 on startup</div>
<div class="bt" style="left:909px;top:597px;width:75px;height:23px"><div class="bti"></div></div>
<div class="t" style="left:939px;top:602px">OK</div>
</body></html>
